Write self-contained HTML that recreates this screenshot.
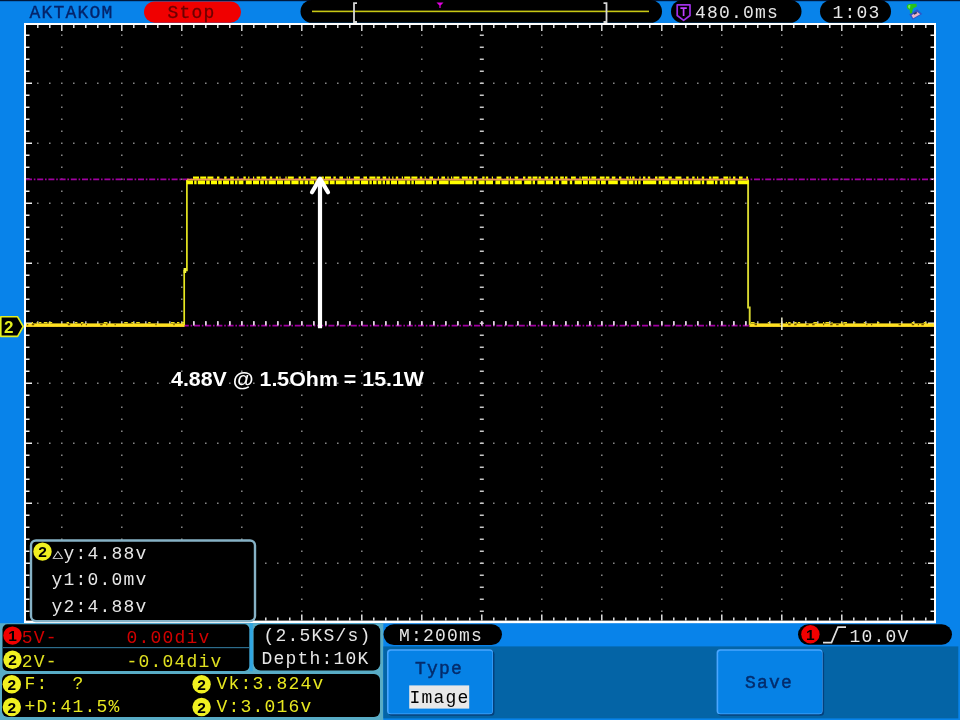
<!DOCTYPE html>
<html lang="en"><head><meta charset="utf-8"><title>AKTAKOM oscilloscope - Stop</title>
<style>
html,body{margin:0;padding:0;background:#0883EA;overflow:hidden}
svg{display:block;position:absolute;left:0;top:0;filter:blur(0.45px)}
text{white-space:pre}
</style></head><body>
<svg width="960" height="720" viewBox="0 0 960 720">
<rect x="0" y="0" width="960" height="720" fill="#0883EA"/>
<rect x="0" y="0" width="960" height="1.2" fill="#00183c"/>
<rect x="144" y="1.5" width="97" height="21.2" rx="10.6" fill="#F00000"/>
<rect x="300.5" y="0" width="361.5" height="22.8" rx="11.4" fill="#000"/>
<rect x="312" y="10.6" width="337" height="1.6" fill="#C8C814"/>
<path d="M357,3.2 H354 V22 H357" fill="none" stroke="#d8d8d8" stroke-width="1.8"/>
<path d="M603.5,3.2 H606.5 V22 H603.5" fill="none" stroke="#d8d8d8" stroke-width="1.8"/>
<path d="M436.5,2.6 H443.5 L440.6,5.6 V8 H439.4 V5.6 Z" fill="#E000E0"/>
<rect x="671" y="0" width="130.5" height="22.8" rx="11.4" fill="#000"/>
<path d="M677.2,4.8 H690 V15.5 L683.6,20.4 L677.2,15.5 Z" fill="none" stroke="#A030E8" stroke-width="1.7" stroke-linejoin="round"/>
<path d="M680.4,8.2 H686.8 M683.6,8.2 V16" fill="none" stroke="#C040FF" stroke-width="1.7"/>
<rect x="820" y="0" width="71" height="22.8" rx="11.4" fill="#000"/>
<g><path d="M909.2,14.6 L917.2,9.2 L922.2,14 L912.8,19.8 Z" fill="#2C56C8"/><path d="M911.6,15.2 L917,11.8 L920.2,14.2 L913.2,18.2 Z" fill="#ECB4C4"/><path d="M913.2,13.6 L916.2,11.8 L917.4,13 L914.4,14.8 Z" fill="#243868"/><path d="M906.8,6.5 C906.8,4.4 908.5,3.6 910.5,4 L916.4,3.8 L916.8,6.6 L913,8.6 L912,13.2 L910,13.4 L909.8,9.8 C908,9.6 906.8,8.4 906.8,6.5 Z" fill="#28C418"/><path d="M908,6.2 C908.2,5 909.4,4.8 910.4,5 L910,8.6 C908.8,8.6 908,7.6 908,6.2Z" fill="#70E860"/></g>
<rect x="24" y="23" width="912" height="600.2" fill="#fff"/>
<rect x="26" y="25" width="908" height="595.6" fill="#000"/>
<path d="M61.05,34.45h1.5v1.5h-1.5zM61.05,46.45h1.5v1.5h-1.5zM61.05,58.45h1.5v1.5h-1.5zM61.05,70.45h1.5v1.5h-1.5zM61.05,94.45h1.5v1.5h-1.5zM61.05,106.45h1.5v1.5h-1.5zM61.05,118.45h1.5v1.5h-1.5zM61.05,130.45h1.5v1.5h-1.5zM61.05,154.45h1.5v1.5h-1.5zM61.05,166.45h1.5v1.5h-1.5zM61.05,178.45h1.5v1.5h-1.5zM61.05,190.45h1.5v1.5h-1.5zM61.05,214.45h1.5v1.5h-1.5zM61.05,226.45h1.5v1.5h-1.5zM61.05,238.45h1.5v1.5h-1.5zM61.05,250.45h1.5v1.5h-1.5zM61.05,274.45h1.5v1.5h-1.5zM61.05,286.45h1.5v1.5h-1.5zM61.05,298.45h1.5v1.5h-1.5zM61.05,310.45h1.5v1.5h-1.5zM61.05,334.45h1.5v1.5h-1.5zM61.05,346.45h1.5v1.5h-1.5zM61.05,358.45h1.5v1.5h-1.5zM61.05,370.45h1.5v1.5h-1.5zM61.05,394.45h1.5v1.5h-1.5zM61.05,406.45h1.5v1.5h-1.5zM61.05,418.45h1.5v1.5h-1.5zM61.05,430.45h1.5v1.5h-1.5zM61.05,454.45h1.5v1.5h-1.5zM61.05,466.45h1.5v1.5h-1.5zM61.05,478.45h1.5v1.5h-1.5zM61.05,490.45h1.5v1.5h-1.5zM61.05,514.45h1.5v1.5h-1.5zM61.05,526.45h1.5v1.5h-1.5zM61.05,538.45h1.5v1.5h-1.5zM61.05,550.45h1.5v1.5h-1.5zM61.05,574.45h1.5v1.5h-1.5zM61.05,586.45h1.5v1.5h-1.5zM61.05,598.45h1.5v1.5h-1.5zM61.05,610.45h1.5v1.5h-1.5zM121.05,34.45h1.5v1.5h-1.5zM121.05,46.45h1.5v1.5h-1.5zM121.05,58.45h1.5v1.5h-1.5zM121.05,70.45h1.5v1.5h-1.5zM121.05,94.45h1.5v1.5h-1.5zM121.05,106.45h1.5v1.5h-1.5zM121.05,118.45h1.5v1.5h-1.5zM121.05,130.45h1.5v1.5h-1.5zM121.05,154.45h1.5v1.5h-1.5zM121.05,166.45h1.5v1.5h-1.5zM121.05,178.45h1.5v1.5h-1.5zM121.05,190.45h1.5v1.5h-1.5zM121.05,214.45h1.5v1.5h-1.5zM121.05,226.45h1.5v1.5h-1.5zM121.05,238.45h1.5v1.5h-1.5zM121.05,250.45h1.5v1.5h-1.5zM121.05,274.45h1.5v1.5h-1.5zM121.05,286.45h1.5v1.5h-1.5zM121.05,298.45h1.5v1.5h-1.5zM121.05,310.45h1.5v1.5h-1.5zM121.05,334.45h1.5v1.5h-1.5zM121.05,346.45h1.5v1.5h-1.5zM121.05,358.45h1.5v1.5h-1.5zM121.05,370.45h1.5v1.5h-1.5zM121.05,394.45h1.5v1.5h-1.5zM121.05,406.45h1.5v1.5h-1.5zM121.05,418.45h1.5v1.5h-1.5zM121.05,430.45h1.5v1.5h-1.5zM121.05,454.45h1.5v1.5h-1.5zM121.05,466.45h1.5v1.5h-1.5zM121.05,478.45h1.5v1.5h-1.5zM121.05,490.45h1.5v1.5h-1.5zM121.05,514.45h1.5v1.5h-1.5zM121.05,526.45h1.5v1.5h-1.5zM121.05,538.45h1.5v1.5h-1.5zM121.05,550.45h1.5v1.5h-1.5zM121.05,574.45h1.5v1.5h-1.5zM121.05,586.45h1.5v1.5h-1.5zM121.05,598.45h1.5v1.5h-1.5zM121.05,610.45h1.5v1.5h-1.5zM181.05,34.45h1.5v1.5h-1.5zM181.05,46.45h1.5v1.5h-1.5zM181.05,58.45h1.5v1.5h-1.5zM181.05,70.45h1.5v1.5h-1.5zM181.05,94.45h1.5v1.5h-1.5zM181.05,106.45h1.5v1.5h-1.5zM181.05,118.45h1.5v1.5h-1.5zM181.05,130.45h1.5v1.5h-1.5zM181.05,154.45h1.5v1.5h-1.5zM181.05,166.45h1.5v1.5h-1.5zM181.05,178.45h1.5v1.5h-1.5zM181.05,190.45h1.5v1.5h-1.5zM181.05,214.45h1.5v1.5h-1.5zM181.05,226.45h1.5v1.5h-1.5zM181.05,238.45h1.5v1.5h-1.5zM181.05,250.45h1.5v1.5h-1.5zM181.05,274.45h1.5v1.5h-1.5zM181.05,286.45h1.5v1.5h-1.5zM181.05,298.45h1.5v1.5h-1.5zM181.05,310.45h1.5v1.5h-1.5zM181.05,334.45h1.5v1.5h-1.5zM181.05,346.45h1.5v1.5h-1.5zM181.05,358.45h1.5v1.5h-1.5zM181.05,370.45h1.5v1.5h-1.5zM181.05,394.45h1.5v1.5h-1.5zM181.05,406.45h1.5v1.5h-1.5zM181.05,418.45h1.5v1.5h-1.5zM181.05,430.45h1.5v1.5h-1.5zM181.05,454.45h1.5v1.5h-1.5zM181.05,466.45h1.5v1.5h-1.5zM181.05,478.45h1.5v1.5h-1.5zM181.05,490.45h1.5v1.5h-1.5zM181.05,514.45h1.5v1.5h-1.5zM181.05,526.45h1.5v1.5h-1.5zM181.05,538.45h1.5v1.5h-1.5zM181.05,550.45h1.5v1.5h-1.5zM181.05,574.45h1.5v1.5h-1.5zM181.05,586.45h1.5v1.5h-1.5zM181.05,598.45h1.5v1.5h-1.5zM181.05,610.45h1.5v1.5h-1.5zM241.05,34.45h1.5v1.5h-1.5zM241.05,46.45h1.5v1.5h-1.5zM241.05,58.45h1.5v1.5h-1.5zM241.05,70.45h1.5v1.5h-1.5zM241.05,94.45h1.5v1.5h-1.5zM241.05,106.45h1.5v1.5h-1.5zM241.05,118.45h1.5v1.5h-1.5zM241.05,130.45h1.5v1.5h-1.5zM241.05,154.45h1.5v1.5h-1.5zM241.05,166.45h1.5v1.5h-1.5zM241.05,178.45h1.5v1.5h-1.5zM241.05,190.45h1.5v1.5h-1.5zM241.05,214.45h1.5v1.5h-1.5zM241.05,226.45h1.5v1.5h-1.5zM241.05,238.45h1.5v1.5h-1.5zM241.05,250.45h1.5v1.5h-1.5zM241.05,274.45h1.5v1.5h-1.5zM241.05,286.45h1.5v1.5h-1.5zM241.05,298.45h1.5v1.5h-1.5zM241.05,310.45h1.5v1.5h-1.5zM241.05,334.45h1.5v1.5h-1.5zM241.05,346.45h1.5v1.5h-1.5zM241.05,358.45h1.5v1.5h-1.5zM241.05,370.45h1.5v1.5h-1.5zM241.05,394.45h1.5v1.5h-1.5zM241.05,406.45h1.5v1.5h-1.5zM241.05,418.45h1.5v1.5h-1.5zM241.05,430.45h1.5v1.5h-1.5zM241.05,454.45h1.5v1.5h-1.5zM241.05,466.45h1.5v1.5h-1.5zM241.05,478.45h1.5v1.5h-1.5zM241.05,490.45h1.5v1.5h-1.5zM241.05,514.45h1.5v1.5h-1.5zM241.05,526.45h1.5v1.5h-1.5zM241.05,538.45h1.5v1.5h-1.5zM241.05,550.45h1.5v1.5h-1.5zM241.05,574.45h1.5v1.5h-1.5zM241.05,586.45h1.5v1.5h-1.5zM241.05,598.45h1.5v1.5h-1.5zM241.05,610.45h1.5v1.5h-1.5zM301.05,34.45h1.5v1.5h-1.5zM301.05,46.45h1.5v1.5h-1.5zM301.05,58.45h1.5v1.5h-1.5zM301.05,70.45h1.5v1.5h-1.5zM301.05,94.45h1.5v1.5h-1.5zM301.05,106.45h1.5v1.5h-1.5zM301.05,118.45h1.5v1.5h-1.5zM301.05,130.45h1.5v1.5h-1.5zM301.05,154.45h1.5v1.5h-1.5zM301.05,166.45h1.5v1.5h-1.5zM301.05,178.45h1.5v1.5h-1.5zM301.05,190.45h1.5v1.5h-1.5zM301.05,214.45h1.5v1.5h-1.5zM301.05,226.45h1.5v1.5h-1.5zM301.05,238.45h1.5v1.5h-1.5zM301.05,250.45h1.5v1.5h-1.5zM301.05,274.45h1.5v1.5h-1.5zM301.05,286.45h1.5v1.5h-1.5zM301.05,298.45h1.5v1.5h-1.5zM301.05,310.45h1.5v1.5h-1.5zM301.05,334.45h1.5v1.5h-1.5zM301.05,346.45h1.5v1.5h-1.5zM301.05,358.45h1.5v1.5h-1.5zM301.05,370.45h1.5v1.5h-1.5zM301.05,394.45h1.5v1.5h-1.5zM301.05,406.45h1.5v1.5h-1.5zM301.05,418.45h1.5v1.5h-1.5zM301.05,430.45h1.5v1.5h-1.5zM301.05,454.45h1.5v1.5h-1.5zM301.05,466.45h1.5v1.5h-1.5zM301.05,478.45h1.5v1.5h-1.5zM301.05,490.45h1.5v1.5h-1.5zM301.05,514.45h1.5v1.5h-1.5zM301.05,526.45h1.5v1.5h-1.5zM301.05,538.45h1.5v1.5h-1.5zM301.05,550.45h1.5v1.5h-1.5zM301.05,574.45h1.5v1.5h-1.5zM301.05,586.45h1.5v1.5h-1.5zM301.05,598.45h1.5v1.5h-1.5zM301.05,610.45h1.5v1.5h-1.5zM361.05,34.45h1.5v1.5h-1.5zM361.05,46.45h1.5v1.5h-1.5zM361.05,58.45h1.5v1.5h-1.5zM361.05,70.45h1.5v1.5h-1.5zM361.05,94.45h1.5v1.5h-1.5zM361.05,106.45h1.5v1.5h-1.5zM361.05,118.45h1.5v1.5h-1.5zM361.05,130.45h1.5v1.5h-1.5zM361.05,154.45h1.5v1.5h-1.5zM361.05,166.45h1.5v1.5h-1.5zM361.05,178.45h1.5v1.5h-1.5zM361.05,190.45h1.5v1.5h-1.5zM361.05,214.45h1.5v1.5h-1.5zM361.05,226.45h1.5v1.5h-1.5zM361.05,238.45h1.5v1.5h-1.5zM361.05,250.45h1.5v1.5h-1.5zM361.05,274.45h1.5v1.5h-1.5zM361.05,286.45h1.5v1.5h-1.5zM361.05,298.45h1.5v1.5h-1.5zM361.05,310.45h1.5v1.5h-1.5zM361.05,334.45h1.5v1.5h-1.5zM361.05,346.45h1.5v1.5h-1.5zM361.05,358.45h1.5v1.5h-1.5zM361.05,370.45h1.5v1.5h-1.5zM361.05,394.45h1.5v1.5h-1.5zM361.05,406.45h1.5v1.5h-1.5zM361.05,418.45h1.5v1.5h-1.5zM361.05,430.45h1.5v1.5h-1.5zM361.05,454.45h1.5v1.5h-1.5zM361.05,466.45h1.5v1.5h-1.5zM361.05,478.45h1.5v1.5h-1.5zM361.05,490.45h1.5v1.5h-1.5zM361.05,514.45h1.5v1.5h-1.5zM361.05,526.45h1.5v1.5h-1.5zM361.05,538.45h1.5v1.5h-1.5zM361.05,550.45h1.5v1.5h-1.5zM361.05,574.45h1.5v1.5h-1.5zM361.05,586.45h1.5v1.5h-1.5zM361.05,598.45h1.5v1.5h-1.5zM361.05,610.45h1.5v1.5h-1.5zM421.05,34.45h1.5v1.5h-1.5zM421.05,46.45h1.5v1.5h-1.5zM421.05,58.45h1.5v1.5h-1.5zM421.05,70.45h1.5v1.5h-1.5zM421.05,94.45h1.5v1.5h-1.5zM421.05,106.45h1.5v1.5h-1.5zM421.05,118.45h1.5v1.5h-1.5zM421.05,130.45h1.5v1.5h-1.5zM421.05,154.45h1.5v1.5h-1.5zM421.05,166.45h1.5v1.5h-1.5zM421.05,178.45h1.5v1.5h-1.5zM421.05,190.45h1.5v1.5h-1.5zM421.05,214.45h1.5v1.5h-1.5zM421.05,226.45h1.5v1.5h-1.5zM421.05,238.45h1.5v1.5h-1.5zM421.05,250.45h1.5v1.5h-1.5zM421.05,274.45h1.5v1.5h-1.5zM421.05,286.45h1.5v1.5h-1.5zM421.05,298.45h1.5v1.5h-1.5zM421.05,310.45h1.5v1.5h-1.5zM421.05,334.45h1.5v1.5h-1.5zM421.05,346.45h1.5v1.5h-1.5zM421.05,358.45h1.5v1.5h-1.5zM421.05,370.45h1.5v1.5h-1.5zM421.05,394.45h1.5v1.5h-1.5zM421.05,406.45h1.5v1.5h-1.5zM421.05,418.45h1.5v1.5h-1.5zM421.05,430.45h1.5v1.5h-1.5zM421.05,454.45h1.5v1.5h-1.5zM421.05,466.45h1.5v1.5h-1.5zM421.05,478.45h1.5v1.5h-1.5zM421.05,490.45h1.5v1.5h-1.5zM421.05,514.45h1.5v1.5h-1.5zM421.05,526.45h1.5v1.5h-1.5zM421.05,538.45h1.5v1.5h-1.5zM421.05,550.45h1.5v1.5h-1.5zM421.05,574.45h1.5v1.5h-1.5zM421.05,586.45h1.5v1.5h-1.5zM421.05,598.45h1.5v1.5h-1.5zM421.05,610.45h1.5v1.5h-1.5zM541.05,34.45h1.5v1.5h-1.5zM541.05,46.45h1.5v1.5h-1.5zM541.05,58.45h1.5v1.5h-1.5zM541.05,70.45h1.5v1.5h-1.5zM541.05,94.45h1.5v1.5h-1.5zM541.05,106.45h1.5v1.5h-1.5zM541.05,118.45h1.5v1.5h-1.5zM541.05,130.45h1.5v1.5h-1.5zM541.05,154.45h1.5v1.5h-1.5zM541.05,166.45h1.5v1.5h-1.5zM541.05,178.45h1.5v1.5h-1.5zM541.05,190.45h1.5v1.5h-1.5zM541.05,214.45h1.5v1.5h-1.5zM541.05,226.45h1.5v1.5h-1.5zM541.05,238.45h1.5v1.5h-1.5zM541.05,250.45h1.5v1.5h-1.5zM541.05,274.45h1.5v1.5h-1.5zM541.05,286.45h1.5v1.5h-1.5zM541.05,298.45h1.5v1.5h-1.5zM541.05,310.45h1.5v1.5h-1.5zM541.05,334.45h1.5v1.5h-1.5zM541.05,346.45h1.5v1.5h-1.5zM541.05,358.45h1.5v1.5h-1.5zM541.05,370.45h1.5v1.5h-1.5zM541.05,394.45h1.5v1.5h-1.5zM541.05,406.45h1.5v1.5h-1.5zM541.05,418.45h1.5v1.5h-1.5zM541.05,430.45h1.5v1.5h-1.5zM541.05,454.45h1.5v1.5h-1.5zM541.05,466.45h1.5v1.5h-1.5zM541.05,478.45h1.5v1.5h-1.5zM541.05,490.45h1.5v1.5h-1.5zM541.05,514.45h1.5v1.5h-1.5zM541.05,526.45h1.5v1.5h-1.5zM541.05,538.45h1.5v1.5h-1.5zM541.05,550.45h1.5v1.5h-1.5zM541.05,574.45h1.5v1.5h-1.5zM541.05,586.45h1.5v1.5h-1.5zM541.05,598.45h1.5v1.5h-1.5zM541.05,610.45h1.5v1.5h-1.5zM601.05,34.45h1.5v1.5h-1.5zM601.05,46.45h1.5v1.5h-1.5zM601.05,58.45h1.5v1.5h-1.5zM601.05,70.45h1.5v1.5h-1.5zM601.05,94.45h1.5v1.5h-1.5zM601.05,106.45h1.5v1.5h-1.5zM601.05,118.45h1.5v1.5h-1.5zM601.05,130.45h1.5v1.5h-1.5zM601.05,154.45h1.5v1.5h-1.5zM601.05,166.45h1.5v1.5h-1.5zM601.05,178.45h1.5v1.5h-1.5zM601.05,190.45h1.5v1.5h-1.5zM601.05,214.45h1.5v1.5h-1.5zM601.05,226.45h1.5v1.5h-1.5zM601.05,238.45h1.5v1.5h-1.5zM601.05,250.45h1.5v1.5h-1.5zM601.05,274.45h1.5v1.5h-1.5zM601.05,286.45h1.5v1.5h-1.5zM601.05,298.45h1.5v1.5h-1.5zM601.05,310.45h1.5v1.5h-1.5zM601.05,334.45h1.5v1.5h-1.5zM601.05,346.45h1.5v1.5h-1.5zM601.05,358.45h1.5v1.5h-1.5zM601.05,370.45h1.5v1.5h-1.5zM601.05,394.45h1.5v1.5h-1.5zM601.05,406.45h1.5v1.5h-1.5zM601.05,418.45h1.5v1.5h-1.5zM601.05,430.45h1.5v1.5h-1.5zM601.05,454.45h1.5v1.5h-1.5zM601.05,466.45h1.5v1.5h-1.5zM601.05,478.45h1.5v1.5h-1.5zM601.05,490.45h1.5v1.5h-1.5zM601.05,514.45h1.5v1.5h-1.5zM601.05,526.45h1.5v1.5h-1.5zM601.05,538.45h1.5v1.5h-1.5zM601.05,550.45h1.5v1.5h-1.5zM601.05,574.45h1.5v1.5h-1.5zM601.05,586.45h1.5v1.5h-1.5zM601.05,598.45h1.5v1.5h-1.5zM601.05,610.45h1.5v1.5h-1.5zM661.05,34.45h1.5v1.5h-1.5zM661.05,46.45h1.5v1.5h-1.5zM661.05,58.45h1.5v1.5h-1.5zM661.05,70.45h1.5v1.5h-1.5zM661.05,94.45h1.5v1.5h-1.5zM661.05,106.45h1.5v1.5h-1.5zM661.05,118.45h1.5v1.5h-1.5zM661.05,130.45h1.5v1.5h-1.5zM661.05,154.45h1.5v1.5h-1.5zM661.05,166.45h1.5v1.5h-1.5zM661.05,178.45h1.5v1.5h-1.5zM661.05,190.45h1.5v1.5h-1.5zM661.05,214.45h1.5v1.5h-1.5zM661.05,226.45h1.5v1.5h-1.5zM661.05,238.45h1.5v1.5h-1.5zM661.05,250.45h1.5v1.5h-1.5zM661.05,274.45h1.5v1.5h-1.5zM661.05,286.45h1.5v1.5h-1.5zM661.05,298.45h1.5v1.5h-1.5zM661.05,310.45h1.5v1.5h-1.5zM661.05,334.45h1.5v1.5h-1.5zM661.05,346.45h1.5v1.5h-1.5zM661.05,358.45h1.5v1.5h-1.5zM661.05,370.45h1.5v1.5h-1.5zM661.05,394.45h1.5v1.5h-1.5zM661.05,406.45h1.5v1.5h-1.5zM661.05,418.45h1.5v1.5h-1.5zM661.05,430.45h1.5v1.5h-1.5zM661.05,454.45h1.5v1.5h-1.5zM661.05,466.45h1.5v1.5h-1.5zM661.05,478.45h1.5v1.5h-1.5zM661.05,490.45h1.5v1.5h-1.5zM661.05,514.45h1.5v1.5h-1.5zM661.05,526.45h1.5v1.5h-1.5zM661.05,538.45h1.5v1.5h-1.5zM661.05,550.45h1.5v1.5h-1.5zM661.05,574.45h1.5v1.5h-1.5zM661.05,586.45h1.5v1.5h-1.5zM661.05,598.45h1.5v1.5h-1.5zM661.05,610.45h1.5v1.5h-1.5zM721.05,34.45h1.5v1.5h-1.5zM721.05,46.45h1.5v1.5h-1.5zM721.05,58.45h1.5v1.5h-1.5zM721.05,70.45h1.5v1.5h-1.5zM721.05,94.45h1.5v1.5h-1.5zM721.05,106.45h1.5v1.5h-1.5zM721.05,118.45h1.5v1.5h-1.5zM721.05,130.45h1.5v1.5h-1.5zM721.05,154.45h1.5v1.5h-1.5zM721.05,166.45h1.5v1.5h-1.5zM721.05,178.45h1.5v1.5h-1.5zM721.05,190.45h1.5v1.5h-1.5zM721.05,214.45h1.5v1.5h-1.5zM721.05,226.45h1.5v1.5h-1.5zM721.05,238.45h1.5v1.5h-1.5zM721.05,250.45h1.5v1.5h-1.5zM721.05,274.45h1.5v1.5h-1.5zM721.05,286.45h1.5v1.5h-1.5zM721.05,298.45h1.5v1.5h-1.5zM721.05,310.45h1.5v1.5h-1.5zM721.05,334.45h1.5v1.5h-1.5zM721.05,346.45h1.5v1.5h-1.5zM721.05,358.45h1.5v1.5h-1.5zM721.05,370.45h1.5v1.5h-1.5zM721.05,394.45h1.5v1.5h-1.5zM721.05,406.45h1.5v1.5h-1.5zM721.05,418.45h1.5v1.5h-1.5zM721.05,430.45h1.5v1.5h-1.5zM721.05,454.45h1.5v1.5h-1.5zM721.05,466.45h1.5v1.5h-1.5zM721.05,478.45h1.5v1.5h-1.5zM721.05,490.45h1.5v1.5h-1.5zM721.05,514.45h1.5v1.5h-1.5zM721.05,526.45h1.5v1.5h-1.5zM721.05,538.45h1.5v1.5h-1.5zM721.05,550.45h1.5v1.5h-1.5zM721.05,574.45h1.5v1.5h-1.5zM721.05,586.45h1.5v1.5h-1.5zM721.05,598.45h1.5v1.5h-1.5zM721.05,610.45h1.5v1.5h-1.5zM781.05,34.45h1.5v1.5h-1.5zM781.05,46.45h1.5v1.5h-1.5zM781.05,58.45h1.5v1.5h-1.5zM781.05,70.45h1.5v1.5h-1.5zM781.05,94.45h1.5v1.5h-1.5zM781.05,106.45h1.5v1.5h-1.5zM781.05,118.45h1.5v1.5h-1.5zM781.05,130.45h1.5v1.5h-1.5zM781.05,154.45h1.5v1.5h-1.5zM781.05,166.45h1.5v1.5h-1.5zM781.05,178.45h1.5v1.5h-1.5zM781.05,190.45h1.5v1.5h-1.5zM781.05,214.45h1.5v1.5h-1.5zM781.05,226.45h1.5v1.5h-1.5zM781.05,238.45h1.5v1.5h-1.5zM781.05,250.45h1.5v1.5h-1.5zM781.05,274.45h1.5v1.5h-1.5zM781.05,286.45h1.5v1.5h-1.5zM781.05,298.45h1.5v1.5h-1.5zM781.05,310.45h1.5v1.5h-1.5zM781.05,334.45h1.5v1.5h-1.5zM781.05,346.45h1.5v1.5h-1.5zM781.05,358.45h1.5v1.5h-1.5zM781.05,370.45h1.5v1.5h-1.5zM781.05,394.45h1.5v1.5h-1.5zM781.05,406.45h1.5v1.5h-1.5zM781.05,418.45h1.5v1.5h-1.5zM781.05,430.45h1.5v1.5h-1.5zM781.05,454.45h1.5v1.5h-1.5zM781.05,466.45h1.5v1.5h-1.5zM781.05,478.45h1.5v1.5h-1.5zM781.05,490.45h1.5v1.5h-1.5zM781.05,514.45h1.5v1.5h-1.5zM781.05,526.45h1.5v1.5h-1.5zM781.05,538.45h1.5v1.5h-1.5zM781.05,550.45h1.5v1.5h-1.5zM781.05,574.45h1.5v1.5h-1.5zM781.05,586.45h1.5v1.5h-1.5zM781.05,598.45h1.5v1.5h-1.5zM781.05,610.45h1.5v1.5h-1.5zM841.05,34.45h1.5v1.5h-1.5zM841.05,46.45h1.5v1.5h-1.5zM841.05,58.45h1.5v1.5h-1.5zM841.05,70.45h1.5v1.5h-1.5zM841.05,94.45h1.5v1.5h-1.5zM841.05,106.45h1.5v1.5h-1.5zM841.05,118.45h1.5v1.5h-1.5zM841.05,130.45h1.5v1.5h-1.5zM841.05,154.45h1.5v1.5h-1.5zM841.05,166.45h1.5v1.5h-1.5zM841.05,178.45h1.5v1.5h-1.5zM841.05,190.45h1.5v1.5h-1.5zM841.05,214.45h1.5v1.5h-1.5zM841.05,226.45h1.5v1.5h-1.5zM841.05,238.45h1.5v1.5h-1.5zM841.05,250.45h1.5v1.5h-1.5zM841.05,274.45h1.5v1.5h-1.5zM841.05,286.45h1.5v1.5h-1.5zM841.05,298.45h1.5v1.5h-1.5zM841.05,310.45h1.5v1.5h-1.5zM841.05,334.45h1.5v1.5h-1.5zM841.05,346.45h1.5v1.5h-1.5zM841.05,358.45h1.5v1.5h-1.5zM841.05,370.45h1.5v1.5h-1.5zM841.05,394.45h1.5v1.5h-1.5zM841.05,406.45h1.5v1.5h-1.5zM841.05,418.45h1.5v1.5h-1.5zM841.05,430.45h1.5v1.5h-1.5zM841.05,454.45h1.5v1.5h-1.5zM841.05,466.45h1.5v1.5h-1.5zM841.05,478.45h1.5v1.5h-1.5zM841.05,490.45h1.5v1.5h-1.5zM841.05,514.45h1.5v1.5h-1.5zM841.05,526.45h1.5v1.5h-1.5zM841.05,538.45h1.5v1.5h-1.5zM841.05,550.45h1.5v1.5h-1.5zM841.05,574.45h1.5v1.5h-1.5zM841.05,586.45h1.5v1.5h-1.5zM841.05,598.45h1.5v1.5h-1.5zM841.05,610.45h1.5v1.5h-1.5zM901.05,34.45h1.5v1.5h-1.5zM901.05,46.45h1.5v1.5h-1.5zM901.05,58.45h1.5v1.5h-1.5zM901.05,70.45h1.5v1.5h-1.5zM901.05,94.45h1.5v1.5h-1.5zM901.05,106.45h1.5v1.5h-1.5zM901.05,118.45h1.5v1.5h-1.5zM901.05,130.45h1.5v1.5h-1.5zM901.05,154.45h1.5v1.5h-1.5zM901.05,166.45h1.5v1.5h-1.5zM901.05,178.45h1.5v1.5h-1.5zM901.05,190.45h1.5v1.5h-1.5zM901.05,214.45h1.5v1.5h-1.5zM901.05,226.45h1.5v1.5h-1.5zM901.05,238.45h1.5v1.5h-1.5zM901.05,250.45h1.5v1.5h-1.5zM901.05,274.45h1.5v1.5h-1.5zM901.05,286.45h1.5v1.5h-1.5zM901.05,298.45h1.5v1.5h-1.5zM901.05,310.45h1.5v1.5h-1.5zM901.05,334.45h1.5v1.5h-1.5zM901.05,346.45h1.5v1.5h-1.5zM901.05,358.45h1.5v1.5h-1.5zM901.05,370.45h1.5v1.5h-1.5zM901.05,394.45h1.5v1.5h-1.5zM901.05,406.45h1.5v1.5h-1.5zM901.05,418.45h1.5v1.5h-1.5zM901.05,430.45h1.5v1.5h-1.5zM901.05,454.45h1.5v1.5h-1.5zM901.05,466.45h1.5v1.5h-1.5zM901.05,478.45h1.5v1.5h-1.5zM901.05,490.45h1.5v1.5h-1.5zM901.05,514.45h1.5v1.5h-1.5zM901.05,526.45h1.5v1.5h-1.5zM901.05,538.45h1.5v1.5h-1.5zM901.05,550.45h1.5v1.5h-1.5zM901.05,574.45h1.5v1.5h-1.5zM901.05,586.45h1.5v1.5h-1.5zM901.05,598.45h1.5v1.5h-1.5zM901.05,610.45h1.5v1.5h-1.5zM37.05,82.45h1.5v1.5h-1.5zM49.05,82.45h1.5v1.5h-1.5zM61.05,82.45h1.5v1.5h-1.5zM73.05,82.45h1.5v1.5h-1.5zM85.05,82.45h1.5v1.5h-1.5zM97.05,82.45h1.5v1.5h-1.5zM109.05,82.45h1.5v1.5h-1.5zM121.05,82.45h1.5v1.5h-1.5zM133.05,82.45h1.5v1.5h-1.5zM145.05,82.45h1.5v1.5h-1.5zM157.05,82.45h1.5v1.5h-1.5zM169.05,82.45h1.5v1.5h-1.5zM181.05,82.45h1.5v1.5h-1.5zM193.05,82.45h1.5v1.5h-1.5zM205.05,82.45h1.5v1.5h-1.5zM217.05,82.45h1.5v1.5h-1.5zM229.05,82.45h1.5v1.5h-1.5zM241.05,82.45h1.5v1.5h-1.5zM253.05,82.45h1.5v1.5h-1.5zM265.05,82.45h1.5v1.5h-1.5zM277.05,82.45h1.5v1.5h-1.5zM289.05,82.45h1.5v1.5h-1.5zM301.05,82.45h1.5v1.5h-1.5zM313.05,82.45h1.5v1.5h-1.5zM325.05,82.45h1.5v1.5h-1.5zM337.05,82.45h1.5v1.5h-1.5zM349.05,82.45h1.5v1.5h-1.5zM361.05,82.45h1.5v1.5h-1.5zM373.05,82.45h1.5v1.5h-1.5zM385.05,82.45h1.5v1.5h-1.5zM397.05,82.45h1.5v1.5h-1.5zM409.05,82.45h1.5v1.5h-1.5zM421.05,82.45h1.5v1.5h-1.5zM433.05,82.45h1.5v1.5h-1.5zM445.05,82.45h1.5v1.5h-1.5zM457.05,82.45h1.5v1.5h-1.5zM469.05,82.45h1.5v1.5h-1.5zM481.05,82.45h1.5v1.5h-1.5zM493.05,82.45h1.5v1.5h-1.5zM505.05,82.45h1.5v1.5h-1.5zM517.05,82.45h1.5v1.5h-1.5zM529.05,82.45h1.5v1.5h-1.5zM541.05,82.45h1.5v1.5h-1.5zM553.05,82.45h1.5v1.5h-1.5zM565.05,82.45h1.5v1.5h-1.5zM577.05,82.45h1.5v1.5h-1.5zM589.05,82.45h1.5v1.5h-1.5zM601.05,82.45h1.5v1.5h-1.5zM613.05,82.45h1.5v1.5h-1.5zM625.05,82.45h1.5v1.5h-1.5zM637.05,82.45h1.5v1.5h-1.5zM649.05,82.45h1.5v1.5h-1.5zM661.05,82.45h1.5v1.5h-1.5zM673.05,82.45h1.5v1.5h-1.5zM685.05,82.45h1.5v1.5h-1.5zM697.05,82.45h1.5v1.5h-1.5zM709.05,82.45h1.5v1.5h-1.5zM721.05,82.45h1.5v1.5h-1.5zM733.05,82.45h1.5v1.5h-1.5zM745.05,82.45h1.5v1.5h-1.5zM757.05,82.45h1.5v1.5h-1.5zM769.05,82.45h1.5v1.5h-1.5zM781.05,82.45h1.5v1.5h-1.5zM793.05,82.45h1.5v1.5h-1.5zM805.05,82.45h1.5v1.5h-1.5zM817.05,82.45h1.5v1.5h-1.5zM829.05,82.45h1.5v1.5h-1.5zM841.05,82.45h1.5v1.5h-1.5zM853.05,82.45h1.5v1.5h-1.5zM865.05,82.45h1.5v1.5h-1.5zM877.05,82.45h1.5v1.5h-1.5zM889.05,82.45h1.5v1.5h-1.5zM901.05,82.45h1.5v1.5h-1.5zM913.05,82.45h1.5v1.5h-1.5zM925.05,82.45h1.5v1.5h-1.5zM37.05,142.45h1.5v1.5h-1.5zM49.05,142.45h1.5v1.5h-1.5zM61.05,142.45h1.5v1.5h-1.5zM73.05,142.45h1.5v1.5h-1.5zM85.05,142.45h1.5v1.5h-1.5zM97.05,142.45h1.5v1.5h-1.5zM109.05,142.45h1.5v1.5h-1.5zM121.05,142.45h1.5v1.5h-1.5zM133.05,142.45h1.5v1.5h-1.5zM145.05,142.45h1.5v1.5h-1.5zM157.05,142.45h1.5v1.5h-1.5zM169.05,142.45h1.5v1.5h-1.5zM181.05,142.45h1.5v1.5h-1.5zM193.05,142.45h1.5v1.5h-1.5zM205.05,142.45h1.5v1.5h-1.5zM217.05,142.45h1.5v1.5h-1.5zM229.05,142.45h1.5v1.5h-1.5zM241.05,142.45h1.5v1.5h-1.5zM253.05,142.45h1.5v1.5h-1.5zM265.05,142.45h1.5v1.5h-1.5zM277.05,142.45h1.5v1.5h-1.5zM289.05,142.45h1.5v1.5h-1.5zM301.05,142.45h1.5v1.5h-1.5zM313.05,142.45h1.5v1.5h-1.5zM325.05,142.45h1.5v1.5h-1.5zM337.05,142.45h1.5v1.5h-1.5zM349.05,142.45h1.5v1.5h-1.5zM361.05,142.45h1.5v1.5h-1.5zM373.05,142.45h1.5v1.5h-1.5zM385.05,142.45h1.5v1.5h-1.5zM397.05,142.45h1.5v1.5h-1.5zM409.05,142.45h1.5v1.5h-1.5zM421.05,142.45h1.5v1.5h-1.5zM433.05,142.45h1.5v1.5h-1.5zM445.05,142.45h1.5v1.5h-1.5zM457.05,142.45h1.5v1.5h-1.5zM469.05,142.45h1.5v1.5h-1.5zM481.05,142.45h1.5v1.5h-1.5zM493.05,142.45h1.5v1.5h-1.5zM505.05,142.45h1.5v1.5h-1.5zM517.05,142.45h1.5v1.5h-1.5zM529.05,142.45h1.5v1.5h-1.5zM541.05,142.45h1.5v1.5h-1.5zM553.05,142.45h1.5v1.5h-1.5zM565.05,142.45h1.5v1.5h-1.5zM577.05,142.45h1.5v1.5h-1.5zM589.05,142.45h1.5v1.5h-1.5zM601.05,142.45h1.5v1.5h-1.5zM613.05,142.45h1.5v1.5h-1.5zM625.05,142.45h1.5v1.5h-1.5zM637.05,142.45h1.5v1.5h-1.5zM649.05,142.45h1.5v1.5h-1.5zM661.05,142.45h1.5v1.5h-1.5zM673.05,142.45h1.5v1.5h-1.5zM685.05,142.45h1.5v1.5h-1.5zM697.05,142.45h1.5v1.5h-1.5zM709.05,142.45h1.5v1.5h-1.5zM721.05,142.45h1.5v1.5h-1.5zM733.05,142.45h1.5v1.5h-1.5zM745.05,142.45h1.5v1.5h-1.5zM757.05,142.45h1.5v1.5h-1.5zM769.05,142.45h1.5v1.5h-1.5zM781.05,142.45h1.5v1.5h-1.5zM793.05,142.45h1.5v1.5h-1.5zM805.05,142.45h1.5v1.5h-1.5zM817.05,142.45h1.5v1.5h-1.5zM829.05,142.45h1.5v1.5h-1.5zM841.05,142.45h1.5v1.5h-1.5zM853.05,142.45h1.5v1.5h-1.5zM865.05,142.45h1.5v1.5h-1.5zM877.05,142.45h1.5v1.5h-1.5zM889.05,142.45h1.5v1.5h-1.5zM901.05,142.45h1.5v1.5h-1.5zM913.05,142.45h1.5v1.5h-1.5zM925.05,142.45h1.5v1.5h-1.5zM37.05,202.45h1.5v1.5h-1.5zM49.05,202.45h1.5v1.5h-1.5zM61.05,202.45h1.5v1.5h-1.5zM73.05,202.45h1.5v1.5h-1.5zM85.05,202.45h1.5v1.5h-1.5zM97.05,202.45h1.5v1.5h-1.5zM109.05,202.45h1.5v1.5h-1.5zM121.05,202.45h1.5v1.5h-1.5zM133.05,202.45h1.5v1.5h-1.5zM145.05,202.45h1.5v1.5h-1.5zM157.05,202.45h1.5v1.5h-1.5zM169.05,202.45h1.5v1.5h-1.5zM181.05,202.45h1.5v1.5h-1.5zM193.05,202.45h1.5v1.5h-1.5zM205.05,202.45h1.5v1.5h-1.5zM217.05,202.45h1.5v1.5h-1.5zM229.05,202.45h1.5v1.5h-1.5zM241.05,202.45h1.5v1.5h-1.5zM253.05,202.45h1.5v1.5h-1.5zM265.05,202.45h1.5v1.5h-1.5zM277.05,202.45h1.5v1.5h-1.5zM289.05,202.45h1.5v1.5h-1.5zM301.05,202.45h1.5v1.5h-1.5zM313.05,202.45h1.5v1.5h-1.5zM325.05,202.45h1.5v1.5h-1.5zM337.05,202.45h1.5v1.5h-1.5zM349.05,202.45h1.5v1.5h-1.5zM361.05,202.45h1.5v1.5h-1.5zM373.05,202.45h1.5v1.5h-1.5zM385.05,202.45h1.5v1.5h-1.5zM397.05,202.45h1.5v1.5h-1.5zM409.05,202.45h1.5v1.5h-1.5zM421.05,202.45h1.5v1.5h-1.5zM433.05,202.45h1.5v1.5h-1.5zM445.05,202.45h1.5v1.5h-1.5zM457.05,202.45h1.5v1.5h-1.5zM469.05,202.45h1.5v1.5h-1.5zM481.05,202.45h1.5v1.5h-1.5zM493.05,202.45h1.5v1.5h-1.5zM505.05,202.45h1.5v1.5h-1.5zM517.05,202.45h1.5v1.5h-1.5zM529.05,202.45h1.5v1.5h-1.5zM541.05,202.45h1.5v1.5h-1.5zM553.05,202.45h1.5v1.5h-1.5zM565.05,202.45h1.5v1.5h-1.5zM577.05,202.45h1.5v1.5h-1.5zM589.05,202.45h1.5v1.5h-1.5zM601.05,202.45h1.5v1.5h-1.5zM613.05,202.45h1.5v1.5h-1.5zM625.05,202.45h1.5v1.5h-1.5zM637.05,202.45h1.5v1.5h-1.5zM649.05,202.45h1.5v1.5h-1.5zM661.05,202.45h1.5v1.5h-1.5zM673.05,202.45h1.5v1.5h-1.5zM685.05,202.45h1.5v1.5h-1.5zM697.05,202.45h1.5v1.5h-1.5zM709.05,202.45h1.5v1.5h-1.5zM721.05,202.45h1.5v1.5h-1.5zM733.05,202.45h1.5v1.5h-1.5zM745.05,202.45h1.5v1.5h-1.5zM757.05,202.45h1.5v1.5h-1.5zM769.05,202.45h1.5v1.5h-1.5zM781.05,202.45h1.5v1.5h-1.5zM793.05,202.45h1.5v1.5h-1.5zM805.05,202.45h1.5v1.5h-1.5zM817.05,202.45h1.5v1.5h-1.5zM829.05,202.45h1.5v1.5h-1.5zM841.05,202.45h1.5v1.5h-1.5zM853.05,202.45h1.5v1.5h-1.5zM865.05,202.45h1.5v1.5h-1.5zM877.05,202.45h1.5v1.5h-1.5zM889.05,202.45h1.5v1.5h-1.5zM901.05,202.45h1.5v1.5h-1.5zM913.05,202.45h1.5v1.5h-1.5zM925.05,202.45h1.5v1.5h-1.5zM37.05,262.45h1.5v1.5h-1.5zM49.05,262.45h1.5v1.5h-1.5zM61.05,262.45h1.5v1.5h-1.5zM73.05,262.45h1.5v1.5h-1.5zM85.05,262.45h1.5v1.5h-1.5zM97.05,262.45h1.5v1.5h-1.5zM109.05,262.45h1.5v1.5h-1.5zM121.05,262.45h1.5v1.5h-1.5zM133.05,262.45h1.5v1.5h-1.5zM145.05,262.45h1.5v1.5h-1.5zM157.05,262.45h1.5v1.5h-1.5zM169.05,262.45h1.5v1.5h-1.5zM181.05,262.45h1.5v1.5h-1.5zM193.05,262.45h1.5v1.5h-1.5zM205.05,262.45h1.5v1.5h-1.5zM217.05,262.45h1.5v1.5h-1.5zM229.05,262.45h1.5v1.5h-1.5zM241.05,262.45h1.5v1.5h-1.5zM253.05,262.45h1.5v1.5h-1.5zM265.05,262.45h1.5v1.5h-1.5zM277.05,262.45h1.5v1.5h-1.5zM289.05,262.45h1.5v1.5h-1.5zM301.05,262.45h1.5v1.5h-1.5zM313.05,262.45h1.5v1.5h-1.5zM325.05,262.45h1.5v1.5h-1.5zM337.05,262.45h1.5v1.5h-1.5zM349.05,262.45h1.5v1.5h-1.5zM361.05,262.45h1.5v1.5h-1.5zM373.05,262.45h1.5v1.5h-1.5zM385.05,262.45h1.5v1.5h-1.5zM397.05,262.45h1.5v1.5h-1.5zM409.05,262.45h1.5v1.5h-1.5zM421.05,262.45h1.5v1.5h-1.5zM433.05,262.45h1.5v1.5h-1.5zM445.05,262.45h1.5v1.5h-1.5zM457.05,262.45h1.5v1.5h-1.5zM469.05,262.45h1.5v1.5h-1.5zM481.05,262.45h1.5v1.5h-1.5zM493.05,262.45h1.5v1.5h-1.5zM505.05,262.45h1.5v1.5h-1.5zM517.05,262.45h1.5v1.5h-1.5zM529.05,262.45h1.5v1.5h-1.5zM541.05,262.45h1.5v1.5h-1.5zM553.05,262.45h1.5v1.5h-1.5zM565.05,262.45h1.5v1.5h-1.5zM577.05,262.45h1.5v1.5h-1.5zM589.05,262.45h1.5v1.5h-1.5zM601.05,262.45h1.5v1.5h-1.5zM613.05,262.45h1.5v1.5h-1.5zM625.05,262.45h1.5v1.5h-1.5zM637.05,262.45h1.5v1.5h-1.5zM649.05,262.45h1.5v1.5h-1.5zM661.05,262.45h1.5v1.5h-1.5zM673.05,262.45h1.5v1.5h-1.5zM685.05,262.45h1.5v1.5h-1.5zM697.05,262.45h1.5v1.5h-1.5zM709.05,262.45h1.5v1.5h-1.5zM721.05,262.45h1.5v1.5h-1.5zM733.05,262.45h1.5v1.5h-1.5zM745.05,262.45h1.5v1.5h-1.5zM757.05,262.45h1.5v1.5h-1.5zM769.05,262.45h1.5v1.5h-1.5zM781.05,262.45h1.5v1.5h-1.5zM793.05,262.45h1.5v1.5h-1.5zM805.05,262.45h1.5v1.5h-1.5zM817.05,262.45h1.5v1.5h-1.5zM829.05,262.45h1.5v1.5h-1.5zM841.05,262.45h1.5v1.5h-1.5zM853.05,262.45h1.5v1.5h-1.5zM865.05,262.45h1.5v1.5h-1.5zM877.05,262.45h1.5v1.5h-1.5zM889.05,262.45h1.5v1.5h-1.5zM901.05,262.45h1.5v1.5h-1.5zM913.05,262.45h1.5v1.5h-1.5zM925.05,262.45h1.5v1.5h-1.5zM37.05,382.45h1.5v1.5h-1.5zM49.05,382.45h1.5v1.5h-1.5zM61.05,382.45h1.5v1.5h-1.5zM73.05,382.45h1.5v1.5h-1.5zM85.05,382.45h1.5v1.5h-1.5zM97.05,382.45h1.5v1.5h-1.5zM109.05,382.45h1.5v1.5h-1.5zM121.05,382.45h1.5v1.5h-1.5zM133.05,382.45h1.5v1.5h-1.5zM145.05,382.45h1.5v1.5h-1.5zM157.05,382.45h1.5v1.5h-1.5zM169.05,382.45h1.5v1.5h-1.5zM181.05,382.45h1.5v1.5h-1.5zM193.05,382.45h1.5v1.5h-1.5zM205.05,382.45h1.5v1.5h-1.5zM217.05,382.45h1.5v1.5h-1.5zM229.05,382.45h1.5v1.5h-1.5zM241.05,382.45h1.5v1.5h-1.5zM253.05,382.45h1.5v1.5h-1.5zM265.05,382.45h1.5v1.5h-1.5zM277.05,382.45h1.5v1.5h-1.5zM289.05,382.45h1.5v1.5h-1.5zM301.05,382.45h1.5v1.5h-1.5zM313.05,382.45h1.5v1.5h-1.5zM325.05,382.45h1.5v1.5h-1.5zM337.05,382.45h1.5v1.5h-1.5zM349.05,382.45h1.5v1.5h-1.5zM361.05,382.45h1.5v1.5h-1.5zM373.05,382.45h1.5v1.5h-1.5zM385.05,382.45h1.5v1.5h-1.5zM397.05,382.45h1.5v1.5h-1.5zM409.05,382.45h1.5v1.5h-1.5zM421.05,382.45h1.5v1.5h-1.5zM433.05,382.45h1.5v1.5h-1.5zM445.05,382.45h1.5v1.5h-1.5zM457.05,382.45h1.5v1.5h-1.5zM469.05,382.45h1.5v1.5h-1.5zM481.05,382.45h1.5v1.5h-1.5zM493.05,382.45h1.5v1.5h-1.5zM505.05,382.45h1.5v1.5h-1.5zM517.05,382.45h1.5v1.5h-1.5zM529.05,382.45h1.5v1.5h-1.5zM541.05,382.45h1.5v1.5h-1.5zM553.05,382.45h1.5v1.5h-1.5zM565.05,382.45h1.5v1.5h-1.5zM577.05,382.45h1.5v1.5h-1.5zM589.05,382.45h1.5v1.5h-1.5zM601.05,382.45h1.5v1.5h-1.5zM613.05,382.45h1.5v1.5h-1.5zM625.05,382.45h1.5v1.5h-1.5zM637.05,382.45h1.5v1.5h-1.5zM649.05,382.45h1.5v1.5h-1.5zM661.05,382.45h1.5v1.5h-1.5zM673.05,382.45h1.5v1.5h-1.5zM685.05,382.45h1.5v1.5h-1.5zM697.05,382.45h1.5v1.5h-1.5zM709.05,382.45h1.5v1.5h-1.5zM721.05,382.45h1.5v1.5h-1.5zM733.05,382.45h1.5v1.5h-1.5zM745.05,382.45h1.5v1.5h-1.5zM757.05,382.45h1.5v1.5h-1.5zM769.05,382.45h1.5v1.5h-1.5zM781.05,382.45h1.5v1.5h-1.5zM793.05,382.45h1.5v1.5h-1.5zM805.05,382.45h1.5v1.5h-1.5zM817.05,382.45h1.5v1.5h-1.5zM829.05,382.45h1.5v1.5h-1.5zM841.05,382.45h1.5v1.5h-1.5zM853.05,382.45h1.5v1.5h-1.5zM865.05,382.45h1.5v1.5h-1.5zM877.05,382.45h1.5v1.5h-1.5zM889.05,382.45h1.5v1.5h-1.5zM901.05,382.45h1.5v1.5h-1.5zM913.05,382.45h1.5v1.5h-1.5zM925.05,382.45h1.5v1.5h-1.5zM37.05,442.45h1.5v1.5h-1.5zM49.05,442.45h1.5v1.5h-1.5zM61.05,442.45h1.5v1.5h-1.5zM73.05,442.45h1.5v1.5h-1.5zM85.05,442.45h1.5v1.5h-1.5zM97.05,442.45h1.5v1.5h-1.5zM109.05,442.45h1.5v1.5h-1.5zM121.05,442.45h1.5v1.5h-1.5zM133.05,442.45h1.5v1.5h-1.5zM145.05,442.45h1.5v1.5h-1.5zM157.05,442.45h1.5v1.5h-1.5zM169.05,442.45h1.5v1.5h-1.5zM181.05,442.45h1.5v1.5h-1.5zM193.05,442.45h1.5v1.5h-1.5zM205.05,442.45h1.5v1.5h-1.5zM217.05,442.45h1.5v1.5h-1.5zM229.05,442.45h1.5v1.5h-1.5zM241.05,442.45h1.5v1.5h-1.5zM253.05,442.45h1.5v1.5h-1.5zM265.05,442.45h1.5v1.5h-1.5zM277.05,442.45h1.5v1.5h-1.5zM289.05,442.45h1.5v1.5h-1.5zM301.05,442.45h1.5v1.5h-1.5zM313.05,442.45h1.5v1.5h-1.5zM325.05,442.45h1.5v1.5h-1.5zM337.05,442.45h1.5v1.5h-1.5zM349.05,442.45h1.5v1.5h-1.5zM361.05,442.45h1.5v1.5h-1.5zM373.05,442.45h1.5v1.5h-1.5zM385.05,442.45h1.5v1.5h-1.5zM397.05,442.45h1.5v1.5h-1.5zM409.05,442.45h1.5v1.5h-1.5zM421.05,442.45h1.5v1.5h-1.5zM433.05,442.45h1.5v1.5h-1.5zM445.05,442.45h1.5v1.5h-1.5zM457.05,442.45h1.5v1.5h-1.5zM469.05,442.45h1.5v1.5h-1.5zM481.05,442.45h1.5v1.5h-1.5zM493.05,442.45h1.5v1.5h-1.5zM505.05,442.45h1.5v1.5h-1.5zM517.05,442.45h1.5v1.5h-1.5zM529.05,442.45h1.5v1.5h-1.5zM541.05,442.45h1.5v1.5h-1.5zM553.05,442.45h1.5v1.5h-1.5zM565.05,442.45h1.5v1.5h-1.5zM577.05,442.45h1.5v1.5h-1.5zM589.05,442.45h1.5v1.5h-1.5zM601.05,442.45h1.5v1.5h-1.5zM613.05,442.45h1.5v1.5h-1.5zM625.05,442.45h1.5v1.5h-1.5zM637.05,442.45h1.5v1.5h-1.5zM649.05,442.45h1.5v1.5h-1.5zM661.05,442.45h1.5v1.5h-1.5zM673.05,442.45h1.5v1.5h-1.5zM685.05,442.45h1.5v1.5h-1.5zM697.05,442.45h1.5v1.5h-1.5zM709.05,442.45h1.5v1.5h-1.5zM721.05,442.45h1.5v1.5h-1.5zM733.05,442.45h1.5v1.5h-1.5zM745.05,442.45h1.5v1.5h-1.5zM757.05,442.45h1.5v1.5h-1.5zM769.05,442.45h1.5v1.5h-1.5zM781.05,442.45h1.5v1.5h-1.5zM793.05,442.45h1.5v1.5h-1.5zM805.05,442.45h1.5v1.5h-1.5zM817.05,442.45h1.5v1.5h-1.5zM829.05,442.45h1.5v1.5h-1.5zM841.05,442.45h1.5v1.5h-1.5zM853.05,442.45h1.5v1.5h-1.5zM865.05,442.45h1.5v1.5h-1.5zM877.05,442.45h1.5v1.5h-1.5zM889.05,442.45h1.5v1.5h-1.5zM901.05,442.45h1.5v1.5h-1.5zM913.05,442.45h1.5v1.5h-1.5zM925.05,442.45h1.5v1.5h-1.5zM37.05,502.45h1.5v1.5h-1.5zM49.05,502.45h1.5v1.5h-1.5zM61.05,502.45h1.5v1.5h-1.5zM73.05,502.45h1.5v1.5h-1.5zM85.05,502.45h1.5v1.5h-1.5zM97.05,502.45h1.5v1.5h-1.5zM109.05,502.45h1.5v1.5h-1.5zM121.05,502.45h1.5v1.5h-1.5zM133.05,502.45h1.5v1.5h-1.5zM145.05,502.45h1.5v1.5h-1.5zM157.05,502.45h1.5v1.5h-1.5zM169.05,502.45h1.5v1.5h-1.5zM181.05,502.45h1.5v1.5h-1.5zM193.05,502.45h1.5v1.5h-1.5zM205.05,502.45h1.5v1.5h-1.5zM217.05,502.45h1.5v1.5h-1.5zM229.05,502.45h1.5v1.5h-1.5zM241.05,502.45h1.5v1.5h-1.5zM253.05,502.45h1.5v1.5h-1.5zM265.05,502.45h1.5v1.5h-1.5zM277.05,502.45h1.5v1.5h-1.5zM289.05,502.45h1.5v1.5h-1.5zM301.05,502.45h1.5v1.5h-1.5zM313.05,502.45h1.5v1.5h-1.5zM325.05,502.45h1.5v1.5h-1.5zM337.05,502.45h1.5v1.5h-1.5zM349.05,502.45h1.5v1.5h-1.5zM361.05,502.45h1.5v1.5h-1.5zM373.05,502.45h1.5v1.5h-1.5zM385.05,502.45h1.5v1.5h-1.5zM397.05,502.45h1.5v1.5h-1.5zM409.05,502.45h1.5v1.5h-1.5zM421.05,502.45h1.5v1.5h-1.5zM433.05,502.45h1.5v1.5h-1.5zM445.05,502.45h1.5v1.5h-1.5zM457.05,502.45h1.5v1.5h-1.5zM469.05,502.45h1.5v1.5h-1.5zM481.05,502.45h1.5v1.5h-1.5zM493.05,502.45h1.5v1.5h-1.5zM505.05,502.45h1.5v1.5h-1.5zM517.05,502.45h1.5v1.5h-1.5zM529.05,502.45h1.5v1.5h-1.5zM541.05,502.45h1.5v1.5h-1.5zM553.05,502.45h1.5v1.5h-1.5zM565.05,502.45h1.5v1.5h-1.5zM577.05,502.45h1.5v1.5h-1.5zM589.05,502.45h1.5v1.5h-1.5zM601.05,502.45h1.5v1.5h-1.5zM613.05,502.45h1.5v1.5h-1.5zM625.05,502.45h1.5v1.5h-1.5zM637.05,502.45h1.5v1.5h-1.5zM649.05,502.45h1.5v1.5h-1.5zM661.05,502.45h1.5v1.5h-1.5zM673.05,502.45h1.5v1.5h-1.5zM685.05,502.45h1.5v1.5h-1.5zM697.05,502.45h1.5v1.5h-1.5zM709.05,502.45h1.5v1.5h-1.5zM721.05,502.45h1.5v1.5h-1.5zM733.05,502.45h1.5v1.5h-1.5zM745.05,502.45h1.5v1.5h-1.5zM757.05,502.45h1.5v1.5h-1.5zM769.05,502.45h1.5v1.5h-1.5zM781.05,502.45h1.5v1.5h-1.5zM793.05,502.45h1.5v1.5h-1.5zM805.05,502.45h1.5v1.5h-1.5zM817.05,502.45h1.5v1.5h-1.5zM829.05,502.45h1.5v1.5h-1.5zM841.05,502.45h1.5v1.5h-1.5zM853.05,502.45h1.5v1.5h-1.5zM865.05,502.45h1.5v1.5h-1.5zM877.05,502.45h1.5v1.5h-1.5zM889.05,502.45h1.5v1.5h-1.5zM901.05,502.45h1.5v1.5h-1.5zM913.05,502.45h1.5v1.5h-1.5zM925.05,502.45h1.5v1.5h-1.5zM37.05,562.45h1.5v1.5h-1.5zM49.05,562.45h1.5v1.5h-1.5zM61.05,562.45h1.5v1.5h-1.5zM73.05,562.45h1.5v1.5h-1.5zM85.05,562.45h1.5v1.5h-1.5zM97.05,562.45h1.5v1.5h-1.5zM109.05,562.45h1.5v1.5h-1.5zM121.05,562.45h1.5v1.5h-1.5zM133.05,562.45h1.5v1.5h-1.5zM145.05,562.45h1.5v1.5h-1.5zM157.05,562.45h1.5v1.5h-1.5zM169.05,562.45h1.5v1.5h-1.5zM181.05,562.45h1.5v1.5h-1.5zM193.05,562.45h1.5v1.5h-1.5zM205.05,562.45h1.5v1.5h-1.5zM217.05,562.45h1.5v1.5h-1.5zM229.05,562.45h1.5v1.5h-1.5zM241.05,562.45h1.5v1.5h-1.5zM253.05,562.45h1.5v1.5h-1.5zM265.05,562.45h1.5v1.5h-1.5zM277.05,562.45h1.5v1.5h-1.5zM289.05,562.45h1.5v1.5h-1.5zM301.05,562.45h1.5v1.5h-1.5zM313.05,562.45h1.5v1.5h-1.5zM325.05,562.45h1.5v1.5h-1.5zM337.05,562.45h1.5v1.5h-1.5zM349.05,562.45h1.5v1.5h-1.5zM361.05,562.45h1.5v1.5h-1.5zM373.05,562.45h1.5v1.5h-1.5zM385.05,562.45h1.5v1.5h-1.5zM397.05,562.45h1.5v1.5h-1.5zM409.05,562.45h1.5v1.5h-1.5zM421.05,562.45h1.5v1.5h-1.5zM433.05,562.45h1.5v1.5h-1.5zM445.05,562.45h1.5v1.5h-1.5zM457.05,562.45h1.5v1.5h-1.5zM469.05,562.45h1.5v1.5h-1.5zM481.05,562.45h1.5v1.5h-1.5zM493.05,562.45h1.5v1.5h-1.5zM505.05,562.45h1.5v1.5h-1.5zM517.05,562.45h1.5v1.5h-1.5zM529.05,562.45h1.5v1.5h-1.5zM541.05,562.45h1.5v1.5h-1.5zM553.05,562.45h1.5v1.5h-1.5zM565.05,562.45h1.5v1.5h-1.5zM577.05,562.45h1.5v1.5h-1.5zM589.05,562.45h1.5v1.5h-1.5zM601.05,562.45h1.5v1.5h-1.5zM613.05,562.45h1.5v1.5h-1.5zM625.05,562.45h1.5v1.5h-1.5zM637.05,562.45h1.5v1.5h-1.5zM649.05,562.45h1.5v1.5h-1.5zM661.05,562.45h1.5v1.5h-1.5zM673.05,562.45h1.5v1.5h-1.5zM685.05,562.45h1.5v1.5h-1.5zM697.05,562.45h1.5v1.5h-1.5zM709.05,562.45h1.5v1.5h-1.5zM721.05,562.45h1.5v1.5h-1.5zM733.05,562.45h1.5v1.5h-1.5zM745.05,562.45h1.5v1.5h-1.5zM757.05,562.45h1.5v1.5h-1.5zM769.05,562.45h1.5v1.5h-1.5zM781.05,562.45h1.5v1.5h-1.5zM793.05,562.45h1.5v1.5h-1.5zM805.05,562.45h1.5v1.5h-1.5zM817.05,562.45h1.5v1.5h-1.5zM829.05,562.45h1.5v1.5h-1.5zM841.05,562.45h1.5v1.5h-1.5zM853.05,562.45h1.5v1.5h-1.5zM865.05,562.45h1.5v1.5h-1.5zM877.05,562.45h1.5v1.5h-1.5zM889.05,562.45h1.5v1.5h-1.5zM901.05,562.45h1.5v1.5h-1.5zM913.05,562.45h1.5v1.5h-1.5zM925.05,562.45h1.5v1.5h-1.5z" fill="#8a8a8a"/>
<path d="M37.10,321.2h1.4v4h-1.4zM49.10,321.2h1.4v4h-1.4zM61.10,321.2h1.4v4h-1.4zM73.10,321.2h1.4v4h-1.4zM85.10,321.2h1.4v4h-1.4zM97.10,321.2h1.4v4h-1.4zM109.10,321.2h1.4v4h-1.4zM121.10,321.2h1.4v4h-1.4zM133.10,321.2h1.4v4h-1.4zM145.10,321.2h1.4v4h-1.4zM157.10,321.2h1.4v4h-1.4zM169.10,321.2h1.4v4h-1.4zM181.10,321.2h1.4v4h-1.4zM193.10,321.2h1.4v4h-1.4zM205.10,321.2h1.4v4h-1.4zM217.10,321.2h1.4v4h-1.4zM229.10,321.2h1.4v4h-1.4zM241.10,321.2h1.4v4h-1.4zM253.10,321.2h1.4v4h-1.4zM265.10,321.2h1.4v4h-1.4zM277.10,321.2h1.4v4h-1.4zM289.10,321.2h1.4v4h-1.4zM301.10,321.2h1.4v4h-1.4zM313.10,321.2h1.4v4h-1.4zM325.10,321.2h1.4v4h-1.4zM337.10,321.2h1.4v4h-1.4zM349.10,321.2h1.4v4h-1.4zM361.10,321.2h1.4v4h-1.4zM373.10,321.2h1.4v4h-1.4zM385.10,321.2h1.4v4h-1.4zM397.10,321.2h1.4v4h-1.4zM409.10,321.2h1.4v4h-1.4zM421.10,321.2h1.4v4h-1.4zM433.10,321.2h1.4v4h-1.4zM445.10,321.2h1.4v4h-1.4zM457.10,321.2h1.4v4h-1.4zM469.10,321.2h1.4v4h-1.4zM481.10,321.2h1.4v4h-1.4zM493.10,321.2h1.4v4h-1.4zM505.10,321.2h1.4v4h-1.4zM517.10,321.2h1.4v4h-1.4zM529.10,321.2h1.4v4h-1.4zM541.10,321.2h1.4v4h-1.4zM553.10,321.2h1.4v4h-1.4zM565.10,321.2h1.4v4h-1.4zM577.10,321.2h1.4v4h-1.4zM589.10,321.2h1.4v4h-1.4zM601.10,321.2h1.4v4h-1.4zM613.10,321.2h1.4v4h-1.4zM625.10,321.2h1.4v4h-1.4zM637.10,321.2h1.4v4h-1.4zM649.10,321.2h1.4v4h-1.4zM661.10,321.2h1.4v4h-1.4zM673.10,321.2h1.4v4h-1.4zM685.10,321.2h1.4v4h-1.4zM697.10,321.2h1.4v4h-1.4zM709.10,321.2h1.4v4h-1.4zM721.10,321.2h1.4v4h-1.4zM733.10,321.2h1.4v4h-1.4zM745.10,321.2h1.4v4h-1.4zM757.10,321.2h1.4v4h-1.4zM769.10,321.2h1.4v4h-1.4zM781.10,321.2h1.4v4h-1.4zM793.10,321.2h1.4v4h-1.4zM805.10,321.2h1.4v4h-1.4zM817.10,321.2h1.4v4h-1.4zM829.10,321.2h1.4v4h-1.4zM841.10,321.2h1.4v4h-1.4zM853.10,321.2h1.4v4h-1.4zM865.10,321.2h1.4v4h-1.4zM877.10,321.2h1.4v4h-1.4zM889.10,321.2h1.4v4h-1.4zM901.10,321.2h1.4v4h-1.4zM913.10,321.2h1.4v4h-1.4zM925.10,321.2h1.4v4h-1.4z" fill="#c8c8c8"/>
<path d="M479.8,34.50h4v1.4h-4zM479.8,46.50h4v1.4h-4zM479.8,58.50h4v1.4h-4zM479.8,70.50h4v1.4h-4zM479.8,82.50h4v1.4h-4zM479.8,94.50h4v1.4h-4zM479.8,106.50h4v1.4h-4zM479.8,118.50h4v1.4h-4zM479.8,130.50h4v1.4h-4zM479.8,142.50h4v1.4h-4zM479.8,154.50h4v1.4h-4zM479.8,166.50h4v1.4h-4zM479.8,178.50h4v1.4h-4zM479.8,190.50h4v1.4h-4zM479.8,202.50h4v1.4h-4zM479.8,214.50h4v1.4h-4zM479.8,226.50h4v1.4h-4zM479.8,238.50h4v1.4h-4zM479.8,250.50h4v1.4h-4zM479.8,262.50h4v1.4h-4zM479.8,274.50h4v1.4h-4zM479.8,286.50h4v1.4h-4zM479.8,298.50h4v1.4h-4zM479.8,310.50h4v1.4h-4zM479.8,322.50h4v1.4h-4zM479.8,334.50h4v1.4h-4zM479.8,346.50h4v1.4h-4zM479.8,358.50h4v1.4h-4zM479.8,370.50h4v1.4h-4zM479.8,382.50h4v1.4h-4zM479.8,394.50h4v1.4h-4zM479.8,406.50h4v1.4h-4zM479.8,418.50h4v1.4h-4zM479.8,430.50h4v1.4h-4zM479.8,442.50h4v1.4h-4zM479.8,454.50h4v1.4h-4zM479.8,466.50h4v1.4h-4zM479.8,478.50h4v1.4h-4zM479.8,490.50h4v1.4h-4zM479.8,502.50h4v1.4h-4zM479.8,514.50h4v1.4h-4zM479.8,526.50h4v1.4h-4zM479.8,538.50h4v1.4h-4zM479.8,550.50h4v1.4h-4zM479.8,562.50h4v1.4h-4zM479.8,574.50h4v1.4h-4zM479.8,586.50h4v1.4h-4zM479.8,598.50h4v1.4h-4zM479.8,610.50h4v1.4h-4z" fill="#c8c8c8"/>
<path d="M37.10,25h1.4v3h-1.4zM37.10,617.6h1.4v3h-1.4zM49.10,25h1.4v3h-1.4zM49.10,617.6h1.4v3h-1.4zM61.10,25h1.4v6h-1.4zM61.10,614.6h1.4v6h-1.4zM73.10,25h1.4v3h-1.4zM73.10,617.6h1.4v3h-1.4zM85.10,25h1.4v3h-1.4zM85.10,617.6h1.4v3h-1.4zM97.10,25h1.4v3h-1.4zM97.10,617.6h1.4v3h-1.4zM109.10,25h1.4v3h-1.4zM109.10,617.6h1.4v3h-1.4zM121.10,25h1.4v6h-1.4zM121.10,614.6h1.4v6h-1.4zM133.10,25h1.4v3h-1.4zM133.10,617.6h1.4v3h-1.4zM145.10,25h1.4v3h-1.4zM145.10,617.6h1.4v3h-1.4zM157.10,25h1.4v3h-1.4zM157.10,617.6h1.4v3h-1.4zM169.10,25h1.4v3h-1.4zM169.10,617.6h1.4v3h-1.4zM181.10,25h1.4v6h-1.4zM181.10,614.6h1.4v6h-1.4zM193.10,25h1.4v3h-1.4zM193.10,617.6h1.4v3h-1.4zM205.10,25h1.4v3h-1.4zM205.10,617.6h1.4v3h-1.4zM217.10,25h1.4v3h-1.4zM217.10,617.6h1.4v3h-1.4zM229.10,25h1.4v3h-1.4zM229.10,617.6h1.4v3h-1.4zM241.10,25h1.4v6h-1.4zM241.10,614.6h1.4v6h-1.4zM253.10,25h1.4v3h-1.4zM253.10,617.6h1.4v3h-1.4zM265.10,25h1.4v3h-1.4zM265.10,617.6h1.4v3h-1.4zM277.10,25h1.4v3h-1.4zM277.10,617.6h1.4v3h-1.4zM289.10,25h1.4v3h-1.4zM289.10,617.6h1.4v3h-1.4zM301.10,25h1.4v6h-1.4zM301.10,614.6h1.4v6h-1.4zM313.10,25h1.4v3h-1.4zM313.10,617.6h1.4v3h-1.4zM325.10,25h1.4v3h-1.4zM325.10,617.6h1.4v3h-1.4zM337.10,25h1.4v3h-1.4zM337.10,617.6h1.4v3h-1.4zM349.10,25h1.4v3h-1.4zM349.10,617.6h1.4v3h-1.4zM361.10,25h1.4v6h-1.4zM361.10,614.6h1.4v6h-1.4zM373.10,25h1.4v3h-1.4zM373.10,617.6h1.4v3h-1.4zM385.10,25h1.4v3h-1.4zM385.10,617.6h1.4v3h-1.4zM397.10,25h1.4v3h-1.4zM397.10,617.6h1.4v3h-1.4zM409.10,25h1.4v3h-1.4zM409.10,617.6h1.4v3h-1.4zM421.10,25h1.4v6h-1.4zM421.10,614.6h1.4v6h-1.4zM433.10,25h1.4v3h-1.4zM433.10,617.6h1.4v3h-1.4zM445.10,25h1.4v3h-1.4zM445.10,617.6h1.4v3h-1.4zM457.10,25h1.4v3h-1.4zM457.10,617.6h1.4v3h-1.4zM469.10,25h1.4v3h-1.4zM469.10,617.6h1.4v3h-1.4zM481.10,25h1.4v6h-1.4zM481.10,614.6h1.4v6h-1.4zM493.10,25h1.4v3h-1.4zM493.10,617.6h1.4v3h-1.4zM505.10,25h1.4v3h-1.4zM505.10,617.6h1.4v3h-1.4zM517.10,25h1.4v3h-1.4zM517.10,617.6h1.4v3h-1.4zM529.10,25h1.4v3h-1.4zM529.10,617.6h1.4v3h-1.4zM541.10,25h1.4v6h-1.4zM541.10,614.6h1.4v6h-1.4zM553.10,25h1.4v3h-1.4zM553.10,617.6h1.4v3h-1.4zM565.10,25h1.4v3h-1.4zM565.10,617.6h1.4v3h-1.4zM577.10,25h1.4v3h-1.4zM577.10,617.6h1.4v3h-1.4zM589.10,25h1.4v3h-1.4zM589.10,617.6h1.4v3h-1.4zM601.10,25h1.4v6h-1.4zM601.10,614.6h1.4v6h-1.4zM613.10,25h1.4v3h-1.4zM613.10,617.6h1.4v3h-1.4zM625.10,25h1.4v3h-1.4zM625.10,617.6h1.4v3h-1.4zM637.10,25h1.4v3h-1.4zM637.10,617.6h1.4v3h-1.4zM649.10,25h1.4v3h-1.4zM649.10,617.6h1.4v3h-1.4zM661.10,25h1.4v6h-1.4zM661.10,614.6h1.4v6h-1.4zM673.10,25h1.4v3h-1.4zM673.10,617.6h1.4v3h-1.4zM685.10,25h1.4v3h-1.4zM685.10,617.6h1.4v3h-1.4zM697.10,25h1.4v3h-1.4zM697.10,617.6h1.4v3h-1.4zM709.10,25h1.4v3h-1.4zM709.10,617.6h1.4v3h-1.4zM721.10,25h1.4v6h-1.4zM721.10,614.6h1.4v6h-1.4zM733.10,25h1.4v3h-1.4zM733.10,617.6h1.4v3h-1.4zM745.10,25h1.4v3h-1.4zM745.10,617.6h1.4v3h-1.4zM757.10,25h1.4v3h-1.4zM757.10,617.6h1.4v3h-1.4zM769.10,25h1.4v3h-1.4zM769.10,617.6h1.4v3h-1.4zM781.10,25h1.4v6h-1.4zM781.10,614.6h1.4v6h-1.4zM793.10,25h1.4v3h-1.4zM793.10,617.6h1.4v3h-1.4zM805.10,25h1.4v3h-1.4zM805.10,617.6h1.4v3h-1.4zM817.10,25h1.4v3h-1.4zM817.10,617.6h1.4v3h-1.4zM829.10,25h1.4v3h-1.4zM829.10,617.6h1.4v3h-1.4zM841.10,25h1.4v6h-1.4zM841.10,614.6h1.4v6h-1.4zM853.10,25h1.4v3h-1.4zM853.10,617.6h1.4v3h-1.4zM865.10,25h1.4v3h-1.4zM865.10,617.6h1.4v3h-1.4zM877.10,25h1.4v3h-1.4zM877.10,617.6h1.4v3h-1.4zM889.10,25h1.4v3h-1.4zM889.10,617.6h1.4v3h-1.4zM901.10,25h1.4v6h-1.4zM901.10,614.6h1.4v6h-1.4zM913.10,25h1.4v3h-1.4zM913.10,617.6h1.4v3h-1.4zM925.10,25h1.4v3h-1.4zM925.10,617.6h1.4v3h-1.4zM26,34.50h3.5v1.4h-3.5zM930.5,34.50h3.5v1.4h-3.5zM26,46.50h3.5v1.4h-3.5zM930.5,46.50h3.5v1.4h-3.5zM26,58.50h3.5v1.4h-3.5zM930.5,58.50h3.5v1.4h-3.5zM26,70.50h3.5v1.4h-3.5zM930.5,70.50h3.5v1.4h-3.5zM26,82.50h6v1.4h-6zM928,82.50h6v1.4h-6zM26,94.50h3.5v1.4h-3.5zM930.5,94.50h3.5v1.4h-3.5zM26,106.50h3.5v1.4h-3.5zM930.5,106.50h3.5v1.4h-3.5zM26,118.50h3.5v1.4h-3.5zM930.5,118.50h3.5v1.4h-3.5zM26,130.50h3.5v1.4h-3.5zM930.5,130.50h3.5v1.4h-3.5zM26,142.50h6v1.4h-6zM928,142.50h6v1.4h-6zM26,154.50h3.5v1.4h-3.5zM930.5,154.50h3.5v1.4h-3.5zM26,166.50h3.5v1.4h-3.5zM930.5,166.50h3.5v1.4h-3.5zM26,178.50h3.5v1.4h-3.5zM930.5,178.50h3.5v1.4h-3.5zM26,190.50h3.5v1.4h-3.5zM930.5,190.50h3.5v1.4h-3.5zM26,202.50h6v1.4h-6zM928,202.50h6v1.4h-6zM26,214.50h3.5v1.4h-3.5zM930.5,214.50h3.5v1.4h-3.5zM26,226.50h3.5v1.4h-3.5zM930.5,226.50h3.5v1.4h-3.5zM26,238.50h3.5v1.4h-3.5zM930.5,238.50h3.5v1.4h-3.5zM26,250.50h3.5v1.4h-3.5zM930.5,250.50h3.5v1.4h-3.5zM26,262.50h6v1.4h-6zM928,262.50h6v1.4h-6zM26,274.50h3.5v1.4h-3.5zM930.5,274.50h3.5v1.4h-3.5zM26,286.50h3.5v1.4h-3.5zM930.5,286.50h3.5v1.4h-3.5zM26,298.50h3.5v1.4h-3.5zM930.5,298.50h3.5v1.4h-3.5zM26,310.50h3.5v1.4h-3.5zM930.5,310.50h3.5v1.4h-3.5zM26,322.50h6v1.4h-6zM928,322.50h6v1.4h-6zM26,334.50h3.5v1.4h-3.5zM930.5,334.50h3.5v1.4h-3.5zM26,346.50h3.5v1.4h-3.5zM930.5,346.50h3.5v1.4h-3.5zM26,358.50h3.5v1.4h-3.5zM930.5,358.50h3.5v1.4h-3.5zM26,370.50h3.5v1.4h-3.5zM930.5,370.50h3.5v1.4h-3.5zM26,382.50h6v1.4h-6zM928,382.50h6v1.4h-6zM26,394.50h3.5v1.4h-3.5zM930.5,394.50h3.5v1.4h-3.5zM26,406.50h3.5v1.4h-3.5zM930.5,406.50h3.5v1.4h-3.5zM26,418.50h3.5v1.4h-3.5zM930.5,418.50h3.5v1.4h-3.5zM26,430.50h3.5v1.4h-3.5zM930.5,430.50h3.5v1.4h-3.5zM26,442.50h6v1.4h-6zM928,442.50h6v1.4h-6zM26,454.50h3.5v1.4h-3.5zM930.5,454.50h3.5v1.4h-3.5zM26,466.50h3.5v1.4h-3.5zM930.5,466.50h3.5v1.4h-3.5zM26,478.50h3.5v1.4h-3.5zM930.5,478.50h3.5v1.4h-3.5zM26,490.50h3.5v1.4h-3.5zM930.5,490.50h3.5v1.4h-3.5zM26,502.50h6v1.4h-6zM928,502.50h6v1.4h-6zM26,514.50h3.5v1.4h-3.5zM930.5,514.50h3.5v1.4h-3.5zM26,526.50h3.5v1.4h-3.5zM930.5,526.50h3.5v1.4h-3.5zM26,538.50h3.5v1.4h-3.5zM930.5,538.50h3.5v1.4h-3.5zM26,550.50h3.5v1.4h-3.5zM930.5,550.50h3.5v1.4h-3.5zM26,562.50h6v1.4h-6zM928,562.50h6v1.4h-6zM26,574.50h3.5v1.4h-3.5zM930.5,574.50h3.5v1.4h-3.5zM26,586.50h3.5v1.4h-3.5zM930.5,586.50h3.5v1.4h-3.5zM26,598.50h3.5v1.4h-3.5zM930.5,598.50h3.5v1.4h-3.5zM26,610.50h3.5v1.4h-3.5zM930.5,610.50h3.5v1.4h-3.5z" fill="#f0f0f0"/>
<path d="M26,179.4 H934" stroke="#A000A0" stroke-width="1.6" stroke-dasharray="6 1.8 1.6 1.8" fill="none"/>
<path d="M26,325.6 H934" stroke="#A000A0" stroke-width="1.6" stroke-dasharray="6 1.8 1.6 1.8" fill="none"/>
<path d="M193.00,321.2h1.6v4.2h-1.6zM205.00,321.2h1.6v4.2h-1.6zM217.00,321.2h1.6v4.2h-1.6zM229.00,321.2h1.6v4.2h-1.6zM241.00,321.2h1.6v4.2h-1.6zM253.00,321.2h1.6v4.2h-1.6zM265.00,321.2h1.6v4.2h-1.6zM277.00,321.2h1.6v4.2h-1.6zM289.00,321.2h1.6v4.2h-1.6zM301.00,321.2h1.6v4.2h-1.6zM313.00,321.2h1.6v4.2h-1.6zM325.00,321.2h1.6v4.2h-1.6zM337.00,321.2h1.6v4.2h-1.6zM349.00,321.2h1.6v4.2h-1.6zM361.00,321.2h1.6v4.2h-1.6zM373.00,321.2h1.6v4.2h-1.6zM385.00,321.2h1.6v4.2h-1.6zM397.00,321.2h1.6v4.2h-1.6zM409.00,321.2h1.6v4.2h-1.6zM421.00,321.2h1.6v4.2h-1.6zM433.00,321.2h1.6v4.2h-1.6zM445.00,321.2h1.6v4.2h-1.6zM457.00,321.2h1.6v4.2h-1.6zM469.00,321.2h1.6v4.2h-1.6zM481.00,321.2h1.6v4.2h-1.6zM493.00,321.2h1.6v4.2h-1.6zM505.00,321.2h1.6v4.2h-1.6zM517.00,321.2h1.6v4.2h-1.6zM529.00,321.2h1.6v4.2h-1.6zM541.00,321.2h1.6v4.2h-1.6zM553.00,321.2h1.6v4.2h-1.6zM565.00,321.2h1.6v4.2h-1.6zM577.00,321.2h1.6v4.2h-1.6zM589.00,321.2h1.6v4.2h-1.6zM601.00,321.2h1.6v4.2h-1.6zM613.00,321.2h1.6v4.2h-1.6zM625.00,321.2h1.6v4.2h-1.6zM637.00,321.2h1.6v4.2h-1.6zM649.00,321.2h1.6v4.2h-1.6zM661.00,321.2h1.6v4.2h-1.6zM673.00,321.2h1.6v4.2h-1.6zM685.00,321.2h1.6v4.2h-1.6zM697.00,321.2h1.6v4.2h-1.6zM709.00,321.2h1.6v4.2h-1.6zM721.00,321.2h1.6v4.2h-1.6zM733.00,321.2h1.6v4.2h-1.6zM745.00,321.2h1.6v4.2h-1.6z" fill="#e8d0e8"/>
<rect x="26" y="323.4" width="158.6" height="3.5" fill="#FFE020"/>
<rect x="749.4" y="323.4" width="184.6" height="3.5" fill="#FFE020"/>
<path d="M31.8,322h1.2v1.3h-1.2zM36.6,322h1.2v1.3h-1.2zM39.0,322h2.4v1.3h-2.4zM43.8,322h3.6v1.3h-3.6zM48.6,322h3.6v1.3h-3.6zM66.6,322h2.4v1.3h-2.4zM75.0,322h2.4v1.3h-2.4zM81.0,322h2.4v1.3h-2.4zM103.8,322h3.6v1.3h-3.6zM124.2,322h3.6v1.3h-3.6zM131.4,322h2.4v1.3h-2.4zM136.2,322h3.6v1.3h-3.6zM148.2,322h2.4v1.3h-2.4zM171.0,322h3.6v1.3h-3.6zM177.0,322h2.4v1.3h-2.4zM181.8,322h2.4v1.3h-2.4zM751.0,322h3.6v1.3h-3.6zM767.8,322h1.2v1.3h-1.2zM785.8,322h1.2v1.3h-1.2zM788.2,322h2.4v1.3h-2.4zM794.2,322h2.4v1.3h-2.4zM797.8,322h2.4v1.3h-2.4zM813.4,322h3.6v1.3h-3.6zM823.0,322h1.2v1.3h-1.2zM825.4,322h3.6v1.3h-3.6zM831.4,322h1.2v1.3h-1.2zM841.0,322h1.2v1.3h-1.2zM843.4,322h3.6v1.3h-3.6zM854.2,322h1.2v1.3h-1.2zM863.8,322h1.2v1.3h-1.2zM877.0,322h2.4v1.3h-2.4zM911.8,322h2.4v1.3h-2.4zM923.8,322h2.4v1.3h-2.4z" fill="#F0E020"/>
<path d="M27.0,324h1.2v1.2h-1.2zM31.8,324h2.4v1.2h-2.4zM67.8,324h2.4v1.2h-2.4zM81.0,324h1.2v1.2h-1.2zM85.8,324h1.2v1.2h-1.2zM100.2,324h2.4v1.2h-2.4zM106.2,324h1.2v1.2h-1.2zM114.6,324h1.2v1.2h-1.2zM155.4,324h1.2v1.2h-1.2zM173.4,324h1.2v1.2h-1.2zM754.6,324h2.4v1.2h-2.4zM779.8,324h2.4v1.2h-2.4zM788.2,324h2.4v1.2h-2.4zM794.2,324h2.4v1.2h-2.4zM806.2,324h2.4v1.2h-2.4zM812.2,324h2.4v1.2h-2.4zM823.0,324h1.2v1.2h-1.2zM830.2,324h2.4v1.2h-2.4zM836.2,324h2.4v1.2h-2.4zM843.4,324h1.2v1.2h-1.2zM866.2,324h1.2v1.2h-1.2zM871.0,324h1.2v1.2h-1.2zM898.6,324h2.4v1.2h-2.4zM911.8,324h2.4v1.2h-2.4zM917.8,324h1.2v1.2h-1.2zM921.4,324h2.4v1.2h-2.4z" fill="#705000"/>
<path d="M184.2,325 V270.5 H186.9 V180" stroke="#E8E820" stroke-width="1.7" fill="none"/>
<rect x="183.6" y="268" width="2.6" height="5" fill="#F0F040"/>
<path d="M748.1,180 V307.5 H749.7 V325" stroke="#D8D830" stroke-width="1.9" fill="none"/>
<rect x="187" y="178.7" width="561.5" height="1.8" fill="#F09A50"/>
<path d="M187.0,180.4h6.0v3.8h-6.0zM194.2,180.4h2.4v3.8h-2.4zM197.8,180.4h3.6v3.8h-3.6zM201.4,180.4h3.6v3.8h-3.6zM206.2,180.4h3.6v3.8h-3.6zM211.0,180.4h6.0v3.8h-6.0zM218.2,180.4h3.6v3.8h-3.6zM223.0,180.4h6.0v3.8h-6.0zM230.2,180.4h3.6v3.8h-3.6zM235.0,180.4h2.4v3.8h-2.4zM238.6,180.4h2.4v3.8h-2.4zM241.0,180.4h2.4v3.8h-2.4zM245.8,180.4h6.0v3.8h-6.0zM253.0,180.4h6.0v3.8h-6.0zM260.2,180.4h3.6v3.8h-3.6zM265.0,180.4h2.4v3.8h-2.4zM268.6,180.4h7.2v3.8h-7.2zM277.0,180.4h6.0v3.8h-6.0zM284.2,180.4h6.0v3.8h-6.0zM291.4,180.4h7.2v3.8h-7.2zM299.8,180.4h3.6v3.8h-3.6zM304.6,180.4h3.6v3.8h-3.6zM309.4,180.4h4.8v3.8h-4.8zM315.4,180.4h2.4v3.8h-2.4zM319.0,180.4h2.4v3.8h-2.4zM321.4,180.4h7.2v3.8h-7.2zM329.8,180.4h4.8v3.8h-4.8zM335.8,180.4h2.4v3.8h-2.4zM338.2,180.4h7.2v3.8h-7.2zM346.6,180.4h6.0v3.8h-6.0zM353.8,180.4h6.0v3.8h-6.0zM361.0,180.4h7.2v3.8h-7.2zM369.4,180.4h2.4v3.8h-2.4zM373.0,180.4h3.6v3.8h-3.6zM377.8,180.4h3.6v3.8h-3.6zM382.6,180.4h2.4v3.8h-2.4zM386.2,180.4h3.6v3.8h-3.6zM391.0,180.4h6.0v3.8h-6.0zM398.2,180.4h3.6v3.8h-3.6zM401.8,180.4h3.6v3.8h-3.6zM406.6,180.4h3.6v3.8h-3.6zM411.4,180.4h2.4v3.8h-2.4zM415.0,180.4h4.8v3.8h-4.8zM419.8,180.4h4.8v3.8h-4.8zM425.8,180.4h6.0v3.8h-6.0zM433.0,180.4h3.6v3.8h-3.6zM439.0,180.4h2.4v3.8h-2.4zM441.4,180.4h3.6v3.8h-3.6zM445.0,180.4h3.6v3.8h-3.6zM449.8,180.4h6.0v3.8h-6.0zM455.8,180.4h4.8v3.8h-4.8zM460.6,180.4h3.6v3.8h-3.6zM465.4,180.4h7.2v3.8h-7.2zM473.8,180.4h2.4v3.8h-2.4zM478.6,180.4h6.0v3.8h-6.0zM485.8,180.4h7.2v3.8h-7.2zM495.4,180.4h4.8v3.8h-4.8zM501.4,180.4h7.2v3.8h-7.2zM509.8,180.4h3.6v3.8h-3.6zM514.6,180.4h7.2v3.8h-7.2zM524.2,180.4h7.2v3.8h-7.2zM532.6,180.4h2.4v3.8h-2.4zM537.4,180.4h7.2v3.8h-7.2zM545.8,180.4h7.2v3.8h-7.2zM555.4,180.4h3.6v3.8h-3.6zM561.4,180.4h6.0v3.8h-6.0zM569.8,180.4h2.4v3.8h-2.4zM574.6,180.4h7.2v3.8h-7.2zM583.0,180.4h2.4v3.8h-2.4zM585.4,180.4h2.4v3.8h-2.4zM589.0,180.4h7.2v3.8h-7.2zM597.4,180.4h2.4v3.8h-2.4zM601.0,180.4h4.8v3.8h-4.8zM608.2,180.4h2.4v3.8h-2.4zM610.6,180.4h7.2v3.8h-7.2zM620.2,180.4h7.2v3.8h-7.2zM628.6,180.4h4.8v3.8h-4.8zM634.6,180.4h2.4v3.8h-2.4zM638.2,180.4h2.4v3.8h-2.4zM643.0,180.4h6.0v3.8h-6.0zM649.0,180.4h7.2v3.8h-7.2zM658.6,180.4h2.4v3.8h-2.4zM662.2,180.4h3.6v3.8h-3.6zM665.8,180.4h3.6v3.8h-3.6zM670.6,180.4h7.2v3.8h-7.2zM679.0,180.4h3.6v3.8h-3.6zM683.8,180.4h4.8v3.8h-4.8zM689.8,180.4h2.4v3.8h-2.4zM693.4,180.4h7.2v3.8h-7.2zM701.8,180.4h2.4v3.8h-2.4zM706.6,180.4h7.2v3.8h-7.2zM715.0,180.4h2.4v3.8h-2.4zM719.8,180.4h3.6v3.8h-3.6zM724.6,180.4h3.6v3.8h-3.6zM729.4,180.4h6.0v3.8h-6.0zM737.8,180.4h3.6v3.8h-3.6zM741.4,180.4h4.8v3.8h-4.8zM746.2,180.4h2.4v3.8h-2.4z" fill="#FFFF00"/>
<path d="M193.0,176.4h6.0v2.4h-6.0zM200.2,176.4h6.0v2.4h-6.0zM207.4,176.4h6.0v2.4h-6.0zM217.0,176.4h2.4v2.4h-2.4zM224.2,176.4h2.4v2.4h-2.4zM230.2,176.4h3.6v2.4h-3.6zM237.4,176.4h1.2v2.4h-1.2zM243.4,176.4h2.4v2.4h-2.4zM248.2,176.4h1.2v2.4h-1.2zM253.0,176.4h1.2v2.4h-1.2zM256.6,176.4h3.6v2.4h-3.6zM261.4,176.4h4.8v2.4h-4.8zM269.8,176.4h2.4v2.4h-2.4zM275.8,176.4h2.4v2.4h-2.4zM279.4,176.4h1.2v2.4h-1.2zM285.4,176.4h1.2v2.4h-1.2zM287.8,176.4h6.0v2.4h-6.0zM298.6,176.4h2.4v2.4h-2.4zM303.4,176.4h2.4v2.4h-2.4zM310.6,176.4h6.0v2.4h-6.0zM321.4,176.4h2.4v2.4h-2.4zM325.0,176.4h6.0v2.4h-6.0zM333.4,176.4h2.4v2.4h-2.4zM339.4,176.4h3.6v2.4h-3.6zM346.6,176.4h1.2v2.4h-1.2zM349.0,176.4h1.2v2.4h-1.2zM353.8,176.4h6.0v2.4h-6.0zM363.4,176.4h3.6v2.4h-3.6zM369.4,176.4h6.0v2.4h-6.0zM376.6,176.4h3.6v2.4h-3.6zM382.6,176.4h3.6v2.4h-3.6zM388.6,176.4h1.2v2.4h-1.2zM392.2,176.4h1.2v2.4h-1.2zM395.8,176.4h2.4v2.4h-2.4zM401.8,176.4h1.2v2.4h-1.2zM404.2,176.4h6.0v2.4h-6.0zM411.4,176.4h6.0v2.4h-6.0zM419.8,176.4h2.4v2.4h-2.4zM424.6,176.4h1.2v2.4h-1.2zM429.4,176.4h3.6v2.4h-3.6zM437.8,176.4h1.2v2.4h-1.2zM441.4,176.4h3.6v2.4h-3.6zM447.4,176.4h1.2v2.4h-1.2zM451.0,176.4h1.2v2.4h-1.2zM453.4,176.4h6.0v2.4h-6.0zM461.8,176.4h6.0v2.4h-6.0zM469.0,176.4h2.4v2.4h-2.4zM473.8,176.4h3.6v2.4h-3.6zM482.2,176.4h2.4v2.4h-2.4zM485.8,176.4h2.4v2.4h-2.4zM491.8,176.4h1.2v2.4h-1.2zM496.6,176.4h4.8v2.4h-4.8zM506.2,176.4h2.4v2.4h-2.4zM509.8,176.4h1.2v2.4h-1.2zM514.6,176.4h3.6v2.4h-3.6zM523.0,176.4h2.4v2.4h-2.4zM527.8,176.4h3.6v2.4h-3.6zM532.6,176.4h4.8v2.4h-4.8zM538.6,176.4h2.4v2.4h-2.4zM544.6,176.4h3.6v2.4h-3.6zM550.6,176.4h2.4v2.4h-2.4zM555.4,176.4h2.4v2.4h-2.4zM560.2,176.4h3.6v2.4h-3.6zM565.0,176.4h2.4v2.4h-2.4zM571.0,176.4h4.8v2.4h-4.8zM579.4,176.4h1.2v2.4h-1.2zM581.8,176.4h6.0v2.4h-6.0zM589.0,176.4h1.2v2.4h-1.2zM591.4,176.4h4.8v2.4h-4.8zM599.8,176.4h4.8v2.4h-4.8zM605.8,176.4h3.6v2.4h-3.6zM611.8,176.4h3.6v2.4h-3.6zM619.0,176.4h2.4v2.4h-2.4zM626.2,176.4h2.4v2.4h-2.4zM629.8,176.4h1.2v2.4h-1.2zM632.2,176.4h2.4v2.4h-2.4zM639.4,176.4h1.2v2.4h-1.2zM643.0,176.4h2.4v2.4h-2.4zM647.8,176.4h2.4v2.4h-2.4zM655.0,176.4h2.4v2.4h-2.4zM658.6,176.4h6.0v2.4h-6.0zM668.2,176.4h3.6v2.4h-3.6zM675.4,176.4h6.0v2.4h-6.0zM686.2,176.4h2.4v2.4h-2.4zM692.2,176.4h2.4v2.4h-2.4zM697.0,176.4h1.2v2.4h-1.2zM701.8,176.4h2.4v2.4h-2.4zM709.0,176.4h2.4v2.4h-2.4zM712.6,176.4h6.0v2.4h-6.0zM723.4,176.4h4.8v2.4h-4.8zM729.4,176.4h1.2v2.4h-1.2zM733.0,176.4h2.4v2.4h-2.4zM739.0,176.4h3.6v2.4h-3.6zM746.2,176.4h1.8v2.4h-1.8z" fill="#FFFF00"/>
<rect x="781.1" y="317.5" width="1.5" height="12.5" fill="#f0f0d0"/>
<path d="M320,328.3 V180" stroke="#fff" stroke-width="4.2" fill="none"/>
<path d="M312,192.3 L320,178.6 L328,192.3" stroke="#fff" stroke-width="4.2" fill="none" stroke-linecap="round" stroke-linejoin="round"/>
<text x="171" y="386.2" fill="#fff" style="font-family:'Liberation Sans',sans-serif;font-weight:bold;font-size:20.4px" textLength="253" lengthAdjust="spacingAndGlyphs">4.88V @ 1.5Ohm = 15.1W</text>
<path d="M0.8,316.8 H17.6 L23.2,326.5 L17.6,336.4 H0.8 Z" fill="#000" stroke="#E4F020" stroke-width="1.6" stroke-linejoin="round"/>
<text x="4" y="332.6" fill="#E4F020" style="font-family:'Liberation Sans',sans-serif;font-size:17px;font-weight:bold">2</text>
<rect x="31" y="540.5" width="224" height="80.6" rx="5" fill="#000" stroke="#86B2C6" stroke-width="2.4"/>
<rect x="0" y="623.2" width="383.3" height="96.8" fill="#58ACC6"/>
<rect x="249.4" y="623.2" width="3.4" height="48" fill="#30A6E2"/>
<rect x="2.5" y="624.2" width="246.8" height="46.8" rx="5" fill="#000"/>
<rect x="3" y="647" width="246" height="1.2" fill="#2C6C8C"/>
<rect x="253.6" y="624.2" width="126.6" height="46.4" rx="7" fill="#000"/>
<rect x="2" y="674" width="378" height="43" rx="6" fill="#000"/>
<rect x="383.3" y="646.4" width="575" height="72" fill="#0464A6"/>
<rect x="383.5" y="624.2" width="118.5" height="20.8" rx="10.4" fill="#000"/>
<rect x="798" y="624.2" width="154" height="20.6" rx="10.3" fill="#000"/>
<rect x="388.5" y="650.7" width="106" height="65" rx="3.5" fill="#03407C"/>
<rect x="387" y="649.2" width="106" height="65" rx="3.5" fill="#4AA6FF"/>
<rect x="388.6" y="650.8000000000001" width="103.8" height="62.8" rx="2.5" fill="#0682E6"/>
<rect x="718.1" y="650.7" width="106" height="65" rx="3.5" fill="#03407C"/>
<rect x="716.6" y="649.2" width="106" height="65" rx="3.5" fill="#4AA6FF"/>
<rect x="718.2" y="650.8000000000001" width="103.8" height="62.8" rx="2.5" fill="#0682E6"/>
<rect x="409.2" y="685.4" width="60" height="23.2" fill="#E8E8E8"/>
<path d="M823,642.6 H831.5 L838,627.2 H846" fill="none" stroke="#E0E0E0" stroke-width="1.7"/>
<g style="font-family:'Liberation Mono',monospace;font-size:18px;letter-spacing:1.2px">
<text x="29.4" y="18.4" fill="#04246A" stroke="#04246A" stroke-width="0.35">AKTAKOM</text>
<text x="167.4" y="17.6" fill="#6C0000" stroke="#6C0000" stroke-width="0.3">Stop</text>
<text x="695" y="18.2" fill="#E6E6E6" >480.0ms</text>
<text x="832.6" y="17.8" fill="#E6E6E6" >1:03</text>
<text x="63.4" y="559" fill="#E6E6E6" >y:4.88v</text>
<text x="51.4" y="585" fill="#E6E6E6" >y1:0.0mv</text>
<text x="51.4" y="611.6" fill="#E6E6E6" >y2:4.88v</text>
<text x="21.8" y="642.6" fill="#D00000" >5V-</text>
<text x="126.4" y="642.6" fill="#D00000" >0.00div</text>
<text x="21.8" y="666.8" fill="#E0E020" >2V-</text>
<text x="126.4" y="666.8" fill="#E0E020" >-0.04div</text>
<text x="263.4" y="641" fill="#E6E6E6" >(2.5KS/s)</text>
<text x="261.6" y="664.4" fill="#E6E6E6" >Depth:10K</text>
<text x="24.6" y="689.4" fill="#E8E820" xml:space="preserve">F:  ?</text>
<text x="24.6" y="712.4" fill="#E8E820" >+D:41.5%</text>
<text x="216.6" y="689.4" fill="#E8E820" >Vk:3.824v</text>
<text x="216.6" y="712.4" fill="#E8E820" >V:3.016v</text>
<text x="399" y="640.6" fill="#E6E6E6" >M:200ms</text>
<text x="849.6" y="641.8" fill="#E6E6E6" >10.0V</text>
<text x="415" y="674.2" fill="#042C6C" stroke="#042C6C" stroke-width="0.45">Type</text>
<text x="409.4" y="702.6" fill="#000" >Image</text>
<text x="745" y="688.4" fill="#042C6C" stroke="#042C6C" stroke-width="0.45">Save</text>
</g>
<text transform="translate(52.6,558.4) scale(1.2,0.88)" x="0" y="0" fill="#E6E6E6" style="font-family:'DejaVu Sans Mono','DejaVu Sans',monospace;font-size:15px">△</text>
<circle cx="42.5" cy="551.6" r="9.2" fill="#F0F020"/>
<text x="42.5" y="557.1" fill="#000" text-anchor="middle" style="font-family:'Liberation Sans',sans-serif;font-size:15.5px;font-weight:bold">2</text>
<circle cx="12.5" cy="635.6" r="9.2" fill="#F00000"/>
<text x="12.5" y="641.1" fill="#000" text-anchor="middle" style="font-family:'Liberation Sans',sans-serif;font-size:15.5px;font-weight:bold">1</text>
<circle cx="12.5" cy="659.7" r="9.2" fill="#F0F020"/>
<text x="12.5" y="665.2" fill="#000" text-anchor="middle" style="font-family:'Liberation Sans',sans-serif;font-size:15.5px;font-weight:bold">2</text>
<circle cx="11.8" cy="684.2" r="9.2" fill="#F0F020"/>
<text x="11.8" y="689.7" fill="#000" text-anchor="middle" style="font-family:'Liberation Sans',sans-serif;font-size:15.5px;font-weight:bold">2</text>
<circle cx="11.8" cy="707" r="9.2" fill="#F0F020"/>
<text x="11.8" y="712.5" fill="#000" text-anchor="middle" style="font-family:'Liberation Sans',sans-serif;font-size:15.5px;font-weight:bold">2</text>
<circle cx="201.6" cy="684.2" r="9.2" fill="#F0F020"/>
<text x="201.6" y="689.7" fill="#000" text-anchor="middle" style="font-family:'Liberation Sans',sans-serif;font-size:15.5px;font-weight:bold">2</text>
<circle cx="201.6" cy="707" r="9.2" fill="#F0F020"/>
<text x="201.6" y="712.5" fill="#000" text-anchor="middle" style="font-family:'Liberation Sans',sans-serif;font-size:15.5px;font-weight:bold">2</text>
<circle cx="810.4" cy="634.2" r="9.2" fill="#F00000"/>
<text x="810.4" y="639.7" fill="#000" text-anchor="middle" style="font-family:'Liberation Sans',sans-serif;font-size:15.5px;font-weight:bold">1</text>
</svg>
</body></html>
